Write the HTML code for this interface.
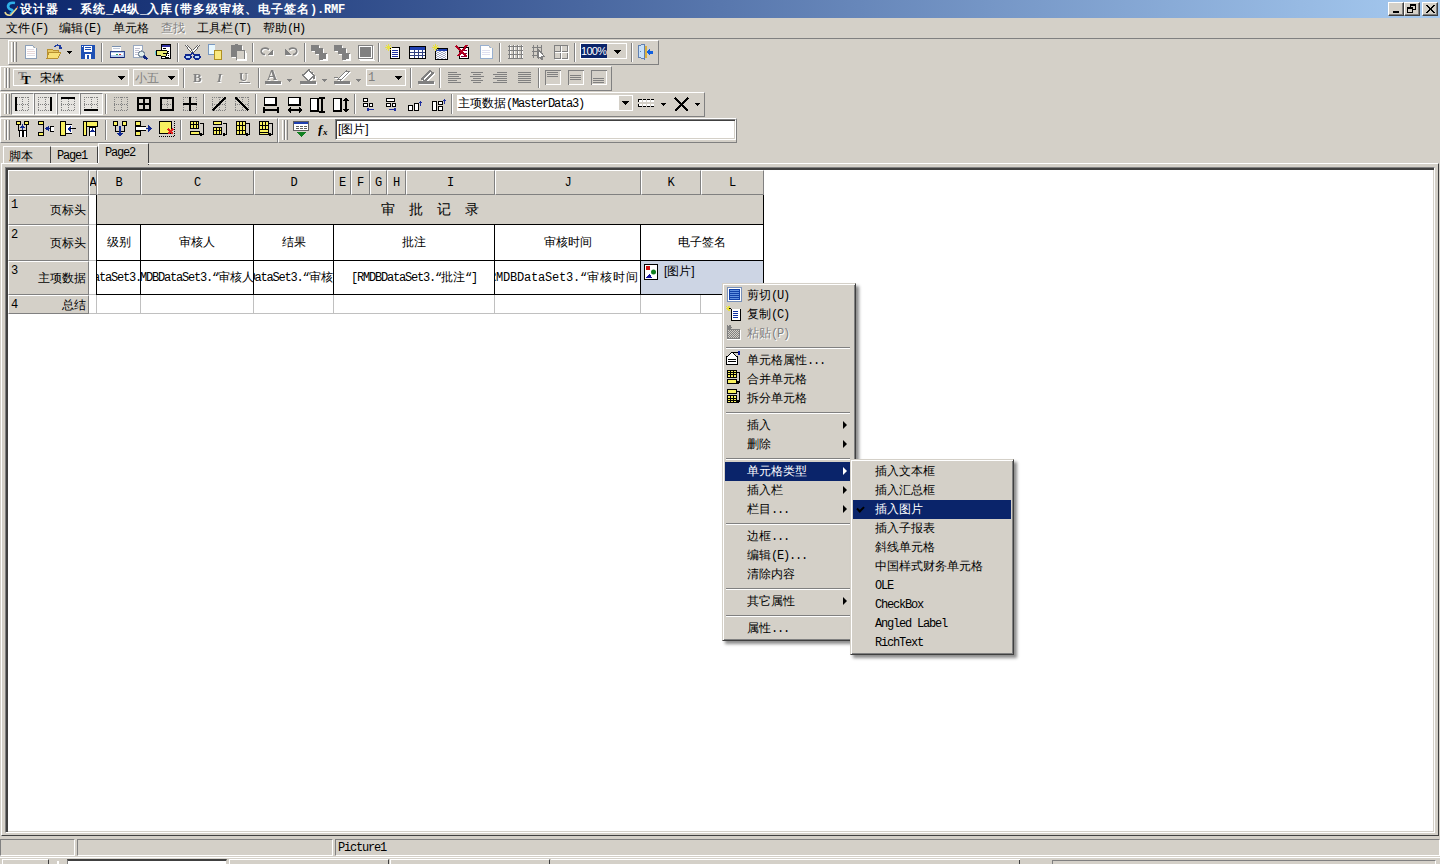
<!DOCTYPE html>
<html><head><meta charset="utf-8">
<style>
*{box-sizing:border-box;margin:0;padding:0}
html,body{width:1440px;height:864px;overflow:hidden;background:#D4D0C8;font-family:"Liberation Sans",sans-serif;font-size:12px;color:#000;position:relative}
.a{position:absolute}
.t{position:absolute;white-space:nowrap;line-height:12px;font-size:12px}
.m{font-family:"Liberation Mono",monospace;letter-spacing:-1.2px}
#title{left:0;top:0;width:1440px;height:18px;background:linear-gradient(to right,#0A246A 0%,#A6CAF0 100%)}
.wbtn{position:absolute;top:2px;width:16px;height:14px;background:#D4D0C8;border:1px solid;border-color:#fff #404040 #404040 #fff;box-shadow:inset -1px -1px 0 #808080}
.tb{position:absolute;background:#D4D0C8;border:1px solid;border-color:#fff #808080 #808080 #fff}
.grip{position:absolute;width:3px;border-left:1px solid #fff;border-right:1px solid #808080}
.sep{position:absolute;width:2px;border-left:1px solid #808080;border-right:1px solid #fff}
.hc{position:absolute;background:#D4D0C8;border-top:1px solid #fff;border-left:1px solid #fff;border-right:1px solid #808080;border-bottom:1px solid #808080;display:flex;justify-content:center;align-items:center;overflow:hidden}
.hc span{font-family:"Liberation Mono",monospace;font-size:12px;line-height:12px}
.rh{position:absolute;background:#D4D0C8;border-top:1px solid #fff;border-left:1px solid #fff;border-right:1px solid #808080;border-bottom:1px solid #808080}
.rn{position:absolute;left:2px;top:3px;font-family:"Liberation Mono",monospace;line-height:12px}
.rl{position:absolute;right:2px;bottom:4px;line-height:12px;white-space:nowrap}
.lg{background:#C0C0C0}
.bl{background:#000}
.ct{position:absolute;height:14px;line-height:12px;display:flex;justify-content:center;overflow:hidden;white-space:nowrap}
.ct>span{flex:none}
.menu{position:absolute;background:#D4D0C8;border:1px solid;border-color:#D4D0C8 #404040 #404040 #D4D0C8;box-shadow:inset 1px 1px 0 #fff,inset -1px -1px 0 #808080,3px 3px 3px rgba(0,0,0,.45)}
.mi{position:absolute;height:19px}
.mi.hl{background:#0A246A;color:#fff}
.mi.dis{color:#808080;text-shadow:1px 1px 0 #fff}
.mt{position:absolute;left:22px;top:3px;line-height:12px;white-space:nowrap}
.st{position:absolute;left:22px;top:3px;line-height:12px;white-space:nowrap}
.arr{position:absolute;right:6px;top:5px;width:0;height:0;border-left:4px solid #000;border-top:4px solid transparent;border-bottom:4px solid transparent}
.mi.hl .arr{border-left-color:#fff}
.msep{position:absolute;height:2px;border-top:1px solid #808080;border-bottom:1px solid #fff}
.chk{position:absolute;left:4px;top:6px;width:7px;height:5px;border-left:2px solid #000;border-bottom:2px solid #000;transform:rotate(-45deg)}
.sp{position:absolute;top:839px;height:17px;border:1px solid;border-color:#808080 #fff #fff #808080}
.ttl{color:#fff;font-weight:bold;letter-spacing:1px}
.tm{font-family:"Liberation Mono",monospace;letter-spacing:-0.2px}
.rl{top:50%;bottom:auto;transform:translateY(-50%)}
.c{display:inline-block;width:12px;font-weight:inherit;text-align:left;overflow:visible;text-indent:0}
.ttl .c{width:13px}
.big .c{width:28px}
.ls1 .c{width:13px}
</style></head><body>
<!-- title bar -->
<div id="title" class="a">
  <svg class="a" style="left:2px;top:1px" width="16" height="16" viewBox="0 0 16 16"><path d="M13 2 Q7 1 6 5 Q6 8 10 9 Q12 11 8 13" stroke="#30B0E8" stroke-width="2.6" fill="none"/><path d="M3 11 Q4 15 9 14 L15 7" stroke="#E8D890" stroke-width="1.5" fill="none"/><rect x="15" y="5" width="1" height="2" fill="#C04040"/></svg><div class="t ttl" style="left:20px;top:3px"><b class="c">设</b><b class="c">计</b><b class="c">器</b><span class="tm"> - </span><b class="c">系</b><b class="c">统</b><span class="tm">_A4</span><b class="c">纵</b><span class="tm">_</span><b class="c">入</b><b class="c">库</b><span class="tm">(</span><b class="c">带</b><b class="c">多</b><b class="c">级</b><b class="c">审</b><b class="c">核</b><b class="c">、</b><b class="c">电</b><b class="c">子</b><b class="c">签</b><b class="c">名</b><span class="tm">).RMF</span></div>
  <div class="wbtn" style="left:1388px"><div class="a" style="left:4px;top:8px;width:6px;height:2px;background:#000"></div></div>
  <div class="wbtn" style="left:1404px"><div class="a" style="left:5px;top:1px;width:6px;height:6px;border:1px solid #000;border-top-width:2px"></div><div class="a" style="left:2px;top:4px;width:6px;height:6px;border:1px solid #000;border-top-width:2px;background:#D4D0C8"></div></div>
  <div class="wbtn" style="left:1422px"><svg class="a" style="left:3px;top:2px" width="9" height="8" viewBox="0 0 9 8" shape-rendering="crispEdges"><path d="M0 0h2l2.5 3 2.5-3h2l-3.5 4 3.5 4h-2l-2.5-3-2.5 3h-2l3.5-4z" fill="#000"/></svg></div>
</div>
<!-- menubar -->
<div class="t" style="left:6px;top:22px"><b class="c">文</b><b class="c">件</b><span class="m">(F)</span></div>
<div class="t" style="left:59px;top:22px"><b class="c">编</b><b class="c">辑</b><span class="m">(E)</span></div>
<div class="t" style="left:113px;top:22px"><b class="c">单</b><b class="c">元</b><b class="c">格</b></div>
<div class="t" style="left:161px;top:22px;color:#808080;text-shadow:1px 1px 0 #fff"><b class="c">查</b><b class="c">找</b></div>
<div class="t" style="left:197px;top:22px"><b class="c">工</b><b class="c">具</b><b class="c">栏</b><span class="m">(T)</span></div>
<div class="t" style="left:263px;top:22px"><b class="c">帮</b><b class="c">助</b><span class="m">(H)</span></div>
<div class="a" style="left:0;top:38px;width:1440px;height:1px;background:#808080"></div>

<!-- toolbars -->
<div class="tb" style="left:8px;top:40px;width:651px;height:25px"></div>
<div class="tb" style="left:0px;top:66px;width:612px;height:25px"></div>
<div class="tb" style="left:0px;top:92px;width:705px;height:25px"></div>
<div class="tb" style="left:0px;top:118px;width:278px;height:25px"></div>
<!-- tabs -->
<div class="a" style="left:3px;top:146px;width:48px;height:18px;border-top:1px solid #fff;border-left:1px solid #fff;border-right:1px solid #404040"></div>
<div class="t" style="left:9px;top:150px"><b class="c">脚</b><b class="c">本</b></div>
<div class="a" style="left:51px;top:146px;width:47px;height:18px;border-top:1px solid #fff;border-right:1px solid #404040"></div>
<div class="t m" style="left:57px;top:150px">Page1</div>
<div class="a" style="left:98px;top:143px;width:51px;height:22px;background:#D4D0C8;border-top:1px solid #fff;border-left:1px solid #fff;border-right:1px solid #404040"></div>
<div class="t m" style="left:105px;top:147px">Page2</div>
<!-- panel -->
<div class="a" style="left:1px;top:163px;width:1438px;height:673px;border:1px solid;border-color:#fff #404040 #404040 #fff"></div>
<div class="a" style="left:98px;top:163px;width:50px;height:2px;background:#D4D0C8"></div>
<div class="a" style="left:5px;top:167px;width:1430px;height:666px;background:#fff;border:1px solid;border-color:#808080 #fff #fff #808080;box-shadow:inset 2px 2px 0 #404040,inset -1px -1px 0 #D4D0C8"></div>
<!-- status bar -->
<div class="sp" style="left:0px;width:75px"></div>
<div class="sp" style="left:77px;width:256px"></div>
<div class="sp" style="left:335px;width:1105px"></div>
<div class="t m" style="left:338px;top:842px">Picture1</div>
<div class="a" style="left:0;top:857px;width:1440px;height:1px;background:#fff"></div>
<div class="a" style="left:2px;top:859px;width:47px;height:6px;border-top:1px solid #fff;border-left:1px solid #fff;border-right:1px solid #404040"></div>
<div class="a" style="left:57px;top:861px;width:2px;height:3px;background:#fff"></div>
<div class="a" style="left:67px;top:859px;width:160px;height:6px;background:#fff;border-top:2px solid #404040;border-left:1px solid #808080;border-right:1px solid #D4D0C8"></div>
<div class="a" style="left:229px;top:859px;width:160px;height:6px;border-top:1px solid #fff;border-left:1px solid #fff;border-right:1px solid #404040"></div>
<div class="a" style="left:390px;top:859px;width:160px;height:6px;border-top:1px solid #fff;border-left:1px solid #fff;border-right:1px solid #404040"></div>
<div class="a" style="left:551px;top:859px;width:469px;height:6px;border-top:1px solid #fff"></div>
<div class="a" style="left:1019px;top:860px;width:1px;height:4px;background:#404040"></div>
<div class="a" style="left:1052px;top:860px;width:384px;height:5px;border-top:1px solid #808080;border-left:1px solid #808080;border-right:1px solid #fff"></div>
<div class="a" style="left:11px;top:42px;width:3px;height:20px;border-left:1px solid #fff;border-right:1px solid #808080"></div>
<div class="a" style="left:14px;top:42px;width:3px;height:20px;border-left:1px solid #fff;border-right:1px solid #808080"></div>
<svg class="a" style="left:25px;top:45px;" width="12" height="14" viewBox="0 0 12 14" shape-rendering="crispEdges"><rect x="0" y="0" width="8" height="1" fill="#8DA0B9"/><rect x="0" y="0" width="1" height="14" fill="#8DA0B9"/><rect x="0" y="13" width="12" height="1" fill="#8DA0B9"/><rect x="11" y="3" width="1" height="11" fill="#8DA0B9"/><rect x="1" y="1" width="7" height="12" fill="#fff"/><rect x="8" y="1" width="1" height="1" fill="#8DA0B9"/><rect x="9" y="2" width="1" height="1" fill="#8DA0B9"/><rect x="10" y="3" width="1" height="1" fill="#8DA0B9"/><rect x="1" y="3" width="10" height="10" fill="#fff"/><rect x="2" y="4" width="7" height="1" fill="#E0D8E0"/><rect x="2" y="6" width="8" height="1" fill="#E8D8D8"/><rect x="2" y="8" width="8" height="1" fill="#E8D8D8"/><rect x="2" y="10" width="8" height="1" fill="#E0E0E8"/></svg>
<svg class="a" style="left:46px;top:44px;" width="17" height="15" viewBox="0 0 17 15" shape-rendering="crispEdges"><path d="M9 3 Q11 0 14 2 L15 4" stroke="#1E3CA0" stroke-width="1.5" fill="none"/><rect x="13" y="3" width="3" height="2" fill="#1E3CA0"/><path d="M1 6 L5 5 L7 6 L12 6 L12 8 L3 8 L1 13Z" fill="#E8C860" stroke="#B89030"/><path d="M3 8 L15 8 L12 14 L1 14Z" fill="#F8E078" stroke="#B89030"/></svg>
<svg class="a" style="left:67px;top:51px;" width="5" height="3" viewBox="0 0 5 3" shape-rendering="crispEdges"><rect x="0" y="0" width="5" height="1" fill="#000"/><rect x="1" y="1" width="3" height="1" fill="#000"/><rect x="2" y="2" width="1" height="1" fill="#000"/></svg>
<svg class="a" style="left:81px;top:45px;" width="14" height="14" viewBox="0 0 14 14" shape-rendering="crispEdges"><rect x="0" y="0" width="14" height="14" fill="#1E50B4"/><rect x="3" y="1" width="8" height="6" fill="#fff"/><rect x="4" y="2" width="6" height="1" fill="#1E50B4"/><rect x="4" y="4" width="6" height="1" fill="#1E50B4"/><rect x="4" y="9" width="6" height="5" fill="#fff"/><rect x="6" y="10" width="2" height="4" fill="#1E50B4"/><rect x="1" y="1" width="1" height="1" fill="#fff"/></svg>
<div class="a" style="left:101px;top:43px;width:1px;height:19px;background:#808080"></div><div class="a" style="left:102px;top:43px;width:1px;height:19px;background:#fff"></div>
<svg class="a" style="left:109px;top:46px;" width="16" height="12" viewBox="0 0 16 12" shape-rendering="crispEdges"><rect x="3" y="0" width="9" height="5" fill="#fff"/><rect x="3" y="0" width="9" height="1" fill="#7890B0"/><rect x="4" y="2" width="7" height="1" fill="#C0C8D8"/><path d="M1 5 L15 5 L15 11 L1 11Z" fill="#B8D0F0" stroke="#304890"/><rect x="2" y="7" width="12" height="2" fill="#fff"/><rect x="7" y="8" width="2" height="1" fill="#20A060"/><rect x="10" y="8" width="2" height="1" fill="#C03040"/><rect x="1" y="11" width="14" height="1" fill="#102070"/></svg>
<svg class="a" style="left:133px;top:45px;" width="16" height="15" viewBox="0 0 16 15" shape-rendering="crispEdges"><rect x="0" y="0" width="10" height="13" fill="#98A8C0"/><rect x="1" y="1" width="8" height="11" fill="#fff"/><rect x="2" y="3" width="5" height="1" fill="#C0C0D0"/><rect x="2" y="5" width="4" height="1" fill="#C0C0D0"/><rect x="2" y="7" width="3" height="1" fill="#C0C0D0"/><rect x="2" y="9" width="3" height="1" fill="#C0C0D0"/><circle cx="8.5" cy="9" r="3" fill="#E0F0F0" stroke="#8090A0" stroke-width="1.2"/><path d="M10.5 11 L14.5 14.5" stroke="#102880" stroke-width="2.5"/></svg>
<svg class="a" style="left:155px;top:44px;" width="17" height="16" viewBox="0 0 17 16" shape-rendering="crispEdges"><rect x="6" y="0" width="10" height="15" fill="#000"/><rect x="7" y="1" width="8" height="13" fill="#fff"/><rect x="7" y="1" width="8" height="2" fill="#3030A0"/><rect x="8" y="4" width="3" height="1" fill="#000"/><rect x="13" y="7" width="1" height="1" fill="#000"/><rect x="13" y="9" width="1" height="1" fill="#000"/><rect x="13" y="11" width="1" height="1" fill="#000"/><rect x="10" y="13" width="4" height="1" fill="#000"/><path d="M1 7 L6 6 L12 7 L12 9 L8 9 L12 10 L11 12 L6 12 L1 11Z" fill="#E8E870" stroke="#000"/><rect x="0" y="7" width="1" height="4" fill="#60C8D0"/></svg>
<div class="a" style="left:177px;top:43px;width:1px;height:19px;background:#808080"></div><div class="a" style="left:178px;top:43px;width:1px;height:19px;background:#fff"></div>
<svg class="a" style="left:184px;top:44px;" width="17" height="16" viewBox="0 0 17 16" shape-rendering="crispEdges"><path d="M2 1 L9 9 M15 1 L8 9" stroke="#606060" stroke-width="2.4"/><path d="M2 1 L9 9 M15 1 L8 9" stroke="#fff" stroke-width="1"/><ellipse cx="4" cy="13" rx="3" ry="2.3" fill="#B8D8F8" stroke="#102890" stroke-width="1.6"/><ellipse cx="13" cy="13" rx="3" ry="2.3" fill="#B8D8F8" stroke="#102890" stroke-width="1.6"/><path d="M6 11 L8.5 9 L11 11" stroke="#102890" stroke-width="1.6" fill="none"/></svg>
<svg class="a" style="left:208px;top:44px;" width="15" height="16" viewBox="0 0 15 16" shape-rendering="crispEdges"><rect x="0" y="0" width="7" height="11" fill="#7898C0"/><rect x="1" y="1" width="6" height="9" fill="#E8F8FF"/><rect x="6" y="6" width="8" height="10" fill="#B09020"/><rect x="7" y="7" width="6" height="8" fill="#F8E880"/></svg>
<svg class="a" style="left:230px;top:44px;filter:drop-shadow(1px 1px 0 #fff)" width="16" height="16" viewBox="0 0 16 16" shape-rendering="crispEdges"><rect x="1" y="1" width="11" height="12" fill="#808080"/><rect x="5" y="0" width="3" height="2" fill="#808080"/><rect x="6" y="6" width="9" height="10" fill="#808080"/><rect x="7" y="7" width="7" height="8" fill="#D4D0C8"/><rect x="7" y="15" width="9" height="1" fill="#fff"/><rect x="15" y="8" width="1" height="8" fill="#fff"/></svg>
<div class="a" style="left:252px;top:43px;width:1px;height:19px;background:#808080"></div><div class="a" style="left:253px;top:43px;width:1px;height:19px;background:#fff"></div>
<svg class="a" style="left:260px;top:47px;filter:drop-shadow(1px 1px 0 #fff)" width="15" height="10" viewBox="0 0 15 10" shape-rendering="crispEdges"><path d="M9 2.5 Q6 0.5 3 1.5 Q0.8 2.5 1.3 5 Q2 7.5 5 7.5" stroke="#808080" stroke-width="1.6" fill="none" shape-rendering="auto"/><path d="M13 2 L13 8 L7 8Z" fill="#808080"/></svg>
<svg class="a" style="left:283px;top:47px;filter:drop-shadow(1px 1px 0 #fff)" width="15" height="10" viewBox="0 0 15 10" shape-rendering="crispEdges"><path d="M6 2.5 Q9 0.5 12 1.5 Q14.2 2.5 13.7 5 Q13 7.5 10 7.5" stroke="#808080" stroke-width="1.6" fill="none" shape-rendering="auto"/><path d="M2 2 L2 8 L8 8Z" fill="#808080"/></svg>
<div class="a" style="left:304px;top:43px;width:1px;height:19px;background:#808080"></div><div class="a" style="left:305px;top:43px;width:1px;height:19px;background:#fff"></div>
<svg class="a" style="left:311px;top:45px;filter:drop-shadow(1px 1px 0 #fff)" width="16" height="15" viewBox="0 0 16 15" shape-rendering="crispEdges"><rect x="0" y="0" width="8" height="6" fill="#808080"/><rect x="4" y="3" width="8" height="6" fill="#808080"/><rect x="8" y="8" width="8" height="7" fill="#808080"/><rect x="12" y="14" width="4" height="1" fill="#fff"/><rect x="15" y="9" width="1" height="6" fill="#fff"/></svg>
<svg class="a" style="left:334px;top:45px;filter:drop-shadow(1px 1px 0 #fff)" width="16" height="15" viewBox="0 0 16 15" shape-rendering="crispEdges"><rect x="0" y="0" width="8" height="6" fill="#808080"/><rect x="4" y="3" width="8" height="6" fill="#808080"/><rect x="8" y="8" width="8" height="7" fill="#808080"/><rect x="12" y="14" width="4" height="1" fill="#fff"/><rect x="15" y="9" width="1" height="6" fill="#fff"/></svg>
<svg class="a" style="left:358px;top:45px;filter:drop-shadow(1px 1px 0 #fff)" width="16" height="15" viewBox="0 0 16 15" shape-rendering="crispEdges"><rect x="0" y="0" width="15" height="14" fill="#808080"/><rect x="1" y="1" width="13" height="12" fill="#fff"/><rect x="2" y="2" width="11" height="10" fill="#808080"/><rect x="1" y="14" width="15" height="1" fill="#fff"/></svg>
<div class="a" style="left:378px;top:43px;width:1px;height:19px;background:#808080"></div><div class="a" style="left:379px;top:43px;width:1px;height:19px;background:#fff"></div>
<svg class="a" style="left:385px;top:44px;" width="16" height="16" viewBox="0 0 16 16" shape-rendering="crispEdges"><rect x="5" y="3" width="10" height="12" fill="#000"/><rect x="6" y="4" width="8" height="10" fill="#fff"/><rect x="7" y="6" width="6" height="1" fill="#2030A0"/><rect x="7" y="8" width="6" height="1" fill="#2030A0"/><rect x="7" y="10" width="6" height="1" fill="#2030A0"/><rect x="7" y="12" width="6" height="1" fill="#2030A0"/><path d="M3 0 L3 7 M0 3.5 L7 3.5 M1 1 L6 6 M6 1 L1 6" stroke="#E8E040" stroke-width="1"/></svg>
<svg class="a" style="left:409px;top:46px;" width="17" height="13" viewBox="0 0 17 13" shape-rendering="crispEdges"><rect x="0" y="0" width="17" height="13" fill="#000"/><rect x="1" y="1" width="15" height="3" fill="#2040B0"/><rect x="1" y="4" width="15" height="8" fill="#fff"/><rect x="1" y="6" width="15" height="1" fill="#304080"/><rect x="1" y="9" width="15" height="1" fill="#304080"/><rect x="5" y="4" width="1" height="8" fill="#304080"/><rect x="9" y="4" width="1" height="8" fill="#304080"/><rect x="13" y="4" width="1" height="8" fill="#304080"/></svg>
<svg class="a" style="left:432px;top:44px;" width="16" height="16" viewBox="0 0 16 16" shape-rendering="crispEdges"><rect x="3" y="4" width="13" height="12" fill="#000"/><rect x="4" y="5" width="11" height="2" fill="#2040B0"/><rect x="4" y="7" width="11" height="8" fill="#fff"/><rect x="4" y="7" width="1" height="1" fill="#A0A8C0"/><rect x="7" y="7" width="1" height="1" fill="#A0A8C0"/><rect x="8" y="7" width="1" height="1" fill="#A0A8C0"/><rect x="11" y="7" width="1" height="1" fill="#A0A8C0"/><rect x="12" y="7" width="1" height="1" fill="#A0A8C0"/><rect x="5" y="8" width="1" height="1" fill="#A0A8C0"/><rect x="6" y="8" width="1" height="1" fill="#A0A8C0"/><rect x="9" y="8" width="1" height="1" fill="#A0A8C0"/><rect x="10" y="8" width="1" height="1" fill="#A0A8C0"/><rect x="13" y="8" width="1" height="1" fill="#A0A8C0"/><rect x="4" y="9" width="1" height="1" fill="#A0A8C0"/><rect x="7" y="9" width="1" height="1" fill="#A0A8C0"/><rect x="8" y="9" width="1" height="1" fill="#A0A8C0"/><rect x="11" y="9" width="1" height="1" fill="#A0A8C0"/><rect x="12" y="9" width="1" height="1" fill="#A0A8C0"/><rect x="5" y="10" width="1" height="1" fill="#A0A8C0"/><rect x="6" y="10" width="1" height="1" fill="#A0A8C0"/><rect x="9" y="10" width="1" height="1" fill="#A0A8C0"/><rect x="10" y="10" width="1" height="1" fill="#A0A8C0"/><rect x="13" y="10" width="1" height="1" fill="#A0A8C0"/><rect x="4" y="11" width="1" height="1" fill="#A0A8C0"/><rect x="7" y="11" width="1" height="1" fill="#A0A8C0"/><rect x="8" y="11" width="1" height="1" fill="#A0A8C0"/><rect x="11" y="11" width="1" height="1" fill="#A0A8C0"/><rect x="12" y="11" width="1" height="1" fill="#A0A8C0"/><rect x="5" y="12" width="1" height="1" fill="#A0A8C0"/><rect x="6" y="12" width="1" height="1" fill="#A0A8C0"/><rect x="9" y="12" width="1" height="1" fill="#A0A8C0"/><rect x="10" y="12" width="1" height="1" fill="#A0A8C0"/><rect x="13" y="12" width="1" height="1" fill="#A0A8C0"/><rect x="4" y="13" width="1" height="1" fill="#A0A8C0"/><rect x="7" y="13" width="1" height="1" fill="#A0A8C0"/><rect x="8" y="13" width="1" height="1" fill="#A0A8C0"/><rect x="11" y="13" width="1" height="1" fill="#A0A8C0"/><rect x="12" y="13" width="1" height="1" fill="#A0A8C0"/><rect x="5" y="14" width="1" height="1" fill="#A0A8C0"/><rect x="6" y="14" width="1" height="1" fill="#A0A8C0"/><rect x="9" y="14" width="1" height="1" fill="#A0A8C0"/><rect x="10" y="14" width="1" height="1" fill="#A0A8C0"/><rect x="13" y="14" width="1" height="1" fill="#A0A8C0"/><path d="M3 0 L3 7 M0 3.5 L7 3.5 M1 1 L6 6 M6 1 L1 6" stroke="#E8E040" stroke-width="1"/></svg>
<svg class="a" style="left:455px;top:44px;" width="15" height="16" viewBox="0 0 15 16" shape-rendering="crispEdges"><rect x="4" y="3" width="10" height="12" fill="#000"/><rect x="5" y="4" width="8" height="10" fill="#fff"/><rect x="6" y="6" width="6" height="1" fill="#800040"/><rect x="6" y="9" width="6" height="1" fill="#800040"/><rect x="6" y="12" width="6" height="1" fill="#800040"/><path d="M1 2 L12 13 M12 1 L3 12" stroke="#B00020" stroke-width="2.2"/></svg>
<svg class="a" style="left:480px;top:45px;" width="13" height="14" viewBox="0 0 13 14" shape-rendering="crispEdges"><rect x="0" y="0" width="9" height="14" fill="#98B0D0"/><rect x="0" y="13" width="13" height="1" fill="#98B0D0"/><rect x="12" y="3" width="1" height="11" fill="#98B0D0"/><rect x="1" y="1" width="8" height="12" fill="#fff"/><rect x="9" y="1" width="1" height="1" fill="#98B0D0"/><rect x="10" y="2" width="1" height="1" fill="#98B0D0"/><rect x="11" y="3" width="1" height="1" fill="#98B0D0"/><rect x="1" y="3" width="11" height="10" fill="#fff"/><rect x="2" y="5" width="8" height="1" fill="#E0E0F0"/><rect x="2" y="7" width="8" height="1" fill="#E0E0F0"/><rect x="2" y="9" width="8" height="1" fill="#E0E0F0"/></svg>
<div class="a" style="left:499px;top:43px;width:1px;height:19px;background:#808080"></div><div class="a" style="left:500px;top:43px;width:1px;height:19px;background:#fff"></div>
<svg class="a" style="left:508px;top:45px;" width="15" height="14" viewBox="0 0 15 14" shape-rendering="crispEdges"><rect x="1" y="0" width="1" height="14" fill="#808080"/><rect x="2" y="0" width="1" height="14" fill="#fff"/><rect x="5" y="0" width="1" height="14" fill="#808080"/><rect x="6" y="0" width="1" height="14" fill="#fff"/><rect x="9" y="0" width="1" height="14" fill="#808080"/><rect x="10" y="0" width="1" height="14" fill="#fff"/><rect x="13" y="0" width="1" height="14" fill="#808080"/><rect x="14" y="0" width="1" height="14" fill="#fff"/><rect x="0" y="1" width="15" height="1" fill="#808080"/><rect x="0" y="5" width="15" height="1" fill="#808080"/><rect x="0" y="9" width="15" height="1" fill="#808080"/><rect x="0" y="13" width="15" height="1" fill="#808080"/></svg>
<svg class="a" style="left:532px;top:45px;" width="14" height="15" viewBox="0 0 14 15" shape-rendering="crispEdges"><rect x="1" y="0" width="1" height="13" fill="#808080"/><rect x="5" y="0" width="1" height="13" fill="#808080"/><rect x="9" y="0" width="1" height="13" fill="#808080"/><rect x="0" y="2" width="10" height="1" fill="#808080"/><rect x="0" y="6" width="10" height="1" fill="#808080"/><rect x="0" y="10" width="10" height="1" fill="#808080"/><path d="M6 4 L6 14 L8 12 L10 15 L11 14 L9 11 L12 11Z" fill="#fff" stroke="#808080"/></svg>
<svg class="a" style="left:554px;top:45px;" width="15" height="15" viewBox="0 0 15 15" shape-rendering="crispEdges"><rect x="0" y="0" width="14" height="1" fill="#808080"/><rect x="0" y="0" width="1" height="14" fill="#808080"/><rect x="13" y="0" width="1" height="14" fill="#808080"/><rect x="0" y="13" width="14" height="1" fill="#808080"/><rect x="6" y="0" width="1" height="14" fill="#808080"/><rect x="0" y="6" width="14" height="1" fill="#808080"/><rect x="1" y="14" width="14" height="1" fill="#fff"/><rect x="14" y="1" width="1" height="14" fill="#fff"/><rect x="7" y="1" width="1" height="13" fill="#fff"/><rect x="1" y="7" width="13" height="1" fill="#fff"/></svg>
<div class="a" style="left:574px;top:43px;width:1px;height:19px;background:#808080"></div><div class="a" style="left:575px;top:43px;width:1px;height:19px;background:#fff"></div>
<div class="a" style="left:580px;top:43px;width:47px;height:16px;border:1px solid #fff;background:#D4D0C8"></div>
<div class="a" style="left:581px;top:44px;width:26px;height:14px;background:#0A246A"></div>
<div class="t" style="left:581px;top:45px;color:#fff;font-size:11px;letter-spacing:-0.7px">100%</div>
<svg class="a" style="left:614px;top:50px;" width="7" height="4" viewBox="0 0 7 4" shape-rendering="crispEdges"><rect x="0" y="0" width="7" height="1" fill="#000"/><rect x="1" y="1" width="5" height="1" fill="#000"/><rect x="2" y="2" width="3" height="1" fill="#000"/><rect x="3" y="3" width="1" height="1" fill="#000"/></svg>
<div class="a" style="left:631px;top:43px;width:1px;height:19px;background:#808080"></div><div class="a" style="left:632px;top:43px;width:1px;height:19px;background:#fff"></div>
<svg class="a" style="left:637px;top:44px;" width="17" height="16" viewBox="0 0 17 16" shape-rendering="crispEdges"><path d="M1 2 L7 0 L7 15 L1 13Z" fill="#C8E0F8" stroke="#6080B0"/><rect x="3" y="7" width="1" height="1" fill="#6080B0"/><rect x="8" y="2" width="2" height="12" fill="#D8B040"/><path d="M9 8 L13 4 L13 6.5 L16 6.5 L16 9.5 L13 9.5 L13 12Z" fill="#1060E0"/></svg>
<div class="a" style="left:4px;top:68px;width:3px;height:20px;border-left:1px solid #fff;border-right:1px solid #808080"></div>
<div class="a" style="left:7px;top:68px;width:3px;height:20px;border-left:1px solid #fff;border-right:1px solid #808080"></div>
<div class="a" style="left:13px;top:69px;width:116px;height:17px;border:1px solid #fff;background:#D4D0C8"></div>
<svg class="a" style="left:18px;top:70px;" width="15" height="15" viewBox="0 0 15 15" shape-rendering="crispEdges"><text x="0" y="10" font-family="Liberation Serif" font-weight="bold" font-size="13" fill="#808080">T</text><text x="4" y="14" font-family="Liberation Serif" font-weight="bold" font-size="13" fill="#000">T</text></svg>
<div class="t" style="left:40px;top:72px"><b class="c">宋</b><b class="c">体</b></div>
<svg class="a" style="left:118px;top:76px;" width="7" height="4" viewBox="0 0 7 4" shape-rendering="crispEdges"><rect x="0" y="0" width="7" height="1" fill="#000"/><rect x="1" y="1" width="5" height="1" fill="#000"/><rect x="2" y="2" width="3" height="1" fill="#000"/><rect x="3" y="3" width="1" height="1" fill="#000"/></svg>
<div class="a" style="left:133px;top:69px;width:46px;height:17px;border:1px solid #fff;background:#D4D0C8"></div>
<div class="t" style="left:135px;top:72px;color:#808080"><b class="c">小</b><b class="c">五</b></div>
<svg class="a" style="left:168px;top:76px;" width="7" height="4" viewBox="0 0 7 4" shape-rendering="crispEdges"><rect x="0" y="0" width="7" height="1" fill="#000"/><rect x="1" y="1" width="5" height="1" fill="#000"/><rect x="2" y="2" width="3" height="1" fill="#000"/><rect x="3" y="3" width="1" height="1" fill="#000"/></svg>
<div class="a" style="left:183px;top:68px;width:1px;height:20px;background:#808080"></div><div class="a" style="left:184px;top:68px;width:1px;height:20px;background:#fff"></div>
<svg class="a" style="left:193px;top:72px;filter:drop-shadow(1px 1px 0 #fff)" width="12" height="11" viewBox="0 0 12 11" shape-rendering="crispEdges"><text x="0" y="10" font-family="Liberation Serif" font-weight="bold" font-size="13" fill="#808080">B</text></svg>
<svg class="a" style="left:216px;top:72px;filter:drop-shadow(1px 1px 0 #fff)" width="12" height="11" viewBox="0 0 12 11" shape-rendering="crispEdges"><text x="1" y="10" font-family="Liberation Serif" font-weight="bold" font-style="italic" font-size="13" fill="#808080">I</text></svg>
<svg class="a" style="left:239px;top:71px;filter:drop-shadow(1px 1px 0 #fff)" width="12" height="13" viewBox="0 0 12 13" shape-rendering="crispEdges"><text x="0" y="10" font-family="Liberation Serif" font-weight="bold" font-size="12" fill="#808080">U</text><rect x="0" y="11" width="11" height="1" fill="#808080"/></svg>
<div class="a" style="left:258px;top:68px;width:1px;height:20px;background:#808080"></div><div class="a" style="left:259px;top:68px;width:1px;height:20px;background:#fff"></div>
<svg class="a" style="left:265px;top:69px;filter:drop-shadow(1px 1px 0 #fff)" width="16" height="16" viewBox="0 0 16 16" shape-rendering="crispEdges"><text x="2" y="11" font-family="Liberation Serif" font-weight="bold" font-size="14" fill="#808080">A</text><rect x="0" y="12" width="16" height="3" fill="#808080"/></svg>
<svg class="a" style="left:287px;top:79px;" width="5" height="3" viewBox="0 0 5 3" shape-rendering="crispEdges"><rect x="0" y="0" width="5" height="1" fill="#808080"/><rect x="1" y="1" width="3" height="1" fill="#808080"/><rect x="2" y="2" width="1" height="1" fill="#808080"/></svg>
<svg class="a" style="left:300px;top:69px;filter:drop-shadow(1px 1px 0 #fff)" width="17" height="16" viewBox="0 0 17 16" shape-rendering="crispEdges"><path d="M3 6 L9 1 L14 7 L8 12Z" fill="#fff" stroke="#808080" stroke-width="1.5"/><path d="M12 4 Q15 7 14 10" stroke="#808080" stroke-width="1.5" fill="none"/><rect x="0" y="12" width="16" height="3" fill="#808080"/></svg>
<svg class="a" style="left:322px;top:79px;" width="5" height="3" viewBox="0 0 5 3" shape-rendering="crispEdges"><rect x="0" y="0" width="5" height="1" fill="#808080"/><rect x="1" y="1" width="3" height="1" fill="#808080"/><rect x="2" y="2" width="1" height="1" fill="#808080"/></svg>
<svg class="a" style="left:334px;top:69px;filter:drop-shadow(1px 1px 0 #fff)" width="17" height="16" viewBox="0 0 17 16" shape-rendering="crispEdges"><path d="M4 10 L12 2 L15 3 L7 11Z" fill="#fff" stroke="#808080" stroke-width="1.3"/><rect x="0" y="8" width="4" height="1" fill="#808080"/><rect x="0" y="12" width="16" height="3" fill="#808080"/></svg>
<svg class="a" style="left:356px;top:79px;" width="5" height="3" viewBox="0 0 5 3" shape-rendering="crispEdges"><rect x="0" y="0" width="5" height="1" fill="#808080"/><rect x="1" y="1" width="3" height="1" fill="#808080"/><rect x="2" y="2" width="1" height="1" fill="#808080"/></svg>
<div class="a" style="left:366px;top:69px;width:40px;height:17px;border:1px solid #fff;background:#D4D0C8"></div>
<div class="t m" style="left:368px;top:72px;color:#808080">1</div>
<svg class="a" style="left:395px;top:76px;" width="7" height="4" viewBox="0 0 7 4" shape-rendering="crispEdges"><rect x="0" y="0" width="7" height="1" fill="#000"/><rect x="1" y="1" width="5" height="1" fill="#000"/><rect x="2" y="2" width="3" height="1" fill="#000"/><rect x="3" y="3" width="1" height="1" fill="#000"/></svg>
<div class="a" style="left:410px;top:68px;width:1px;height:20px;background:#808080"></div><div class="a" style="left:411px;top:68px;width:1px;height:20px;background:#fff"></div>
<svg class="a" style="left:418px;top:69px;filter:drop-shadow(1px 1px 0 #fff)" width="17" height="16" viewBox="0 0 17 16" shape-rendering="crispEdges"><path d="M4 10 L12 2 L15 4 L7 12Z" fill="#fff" stroke="#808080" stroke-width="1.5"/><rect x="0" y="12" width="16" height="3" fill="#808080"/></svg>
<div class="a" style="left:439px;top:68px;width:1px;height:20px;background:#808080"></div><div class="a" style="left:440px;top:68px;width:1px;height:20px;background:#fff"></div>
<svg class="a" style="left:448px;top:72px;" width="15" height="12" viewBox="0 0 15 12" shape-rendering="crispEdges"><rect x="0" y="0" width="9" height="1" fill="#808080"/><rect x="1" y="1" width="9" height="0.01" fill="#fff"/><rect x="0" y="2" width="13" height="1" fill="#808080"/><rect x="1" y="3" width="13" height="0.01" fill="#fff"/><rect x="0" y="4" width="11" height="1" fill="#808080"/><rect x="1" y="5" width="11" height="0.01" fill="#fff"/><rect x="0" y="6" width="13" height="1" fill="#808080"/><rect x="1" y="7" width="13" height="0.01" fill="#fff"/><rect x="0" y="8" width="9" height="1" fill="#808080"/><rect x="1" y="9" width="9" height="0.01" fill="#fff"/><rect x="0" y="10" width="13" height="1" fill="#808080"/><rect x="1" y="11" width="13" height="0.01" fill="#fff"/></svg>
<svg class="a" style="left:470px;top:72px;" width="15" height="12" viewBox="0 0 15 12" shape-rendering="crispEdges"><rect x="1" y="0" width="12" height="1" fill="#808080"/><rect x="2" y="1" width="12" height="0.01" fill="#fff"/><rect x="3" y="2" width="8" height="1" fill="#808080"/><rect x="4" y="3" width="8" height="0.01" fill="#fff"/><rect x="0" y="4" width="14" height="1" fill="#808080"/><rect x="1" y="5" width="14" height="0.01" fill="#fff"/><rect x="3" y="6" width="8" height="1" fill="#808080"/><rect x="4" y="7" width="8" height="0.01" fill="#fff"/><rect x="1" y="8" width="12" height="1" fill="#808080"/><rect x="2" y="9" width="12" height="0.01" fill="#fff"/><rect x="3" y="10" width="8" height="1" fill="#808080"/><rect x="4" y="11" width="8" height="0.01" fill="#fff"/></svg>
<svg class="a" style="left:493px;top:72px;" width="15" height="12" viewBox="0 0 15 12" shape-rendering="crispEdges"><rect x="4" y="0" width="10" height="1" fill="#808080"/><rect x="5" y="1" width="10" height="0.01" fill="#fff"/><rect x="0" y="2" width="14" height="1" fill="#808080"/><rect x="1" y="3" width="14" height="0.01" fill="#fff"/><rect x="2" y="4" width="12" height="1" fill="#808080"/><rect x="3" y="5" width="12" height="0.01" fill="#fff"/><rect x="0" y="6" width="14" height="1" fill="#808080"/><rect x="1" y="7" width="14" height="0.01" fill="#fff"/><rect x="4" y="8" width="10" height="1" fill="#808080"/><rect x="5" y="9" width="10" height="0.01" fill="#fff"/><rect x="0" y="10" width="14" height="1" fill="#808080"/><rect x="1" y="11" width="14" height="0.01" fill="#fff"/></svg>
<svg class="a" style="left:518px;top:72px;" width="15" height="12" viewBox="0 0 15 12" shape-rendering="crispEdges"><rect x="0" y="0" width="13" height="1" fill="#808080"/><rect x="1" y="1" width="13" height="0.01" fill="#fff"/><rect x="0" y="2" width="13" height="1" fill="#808080"/><rect x="1" y="3" width="13" height="0.01" fill="#fff"/><rect x="0" y="4" width="13" height="1" fill="#808080"/><rect x="1" y="5" width="13" height="0.01" fill="#fff"/><rect x="0" y="6" width="13" height="1" fill="#808080"/><rect x="1" y="7" width="13" height="0.01" fill="#fff"/><rect x="0" y="8" width="13" height="1" fill="#808080"/><rect x="1" y="9" width="13" height="0.01" fill="#fff"/><rect x="0" y="10" width="13" height="1" fill="#808080"/><rect x="1" y="11" width="13" height="0.01" fill="#fff"/></svg>
<div class="a" style="left:538px;top:68px;width:1px;height:20px;background:#808080"></div><div class="a" style="left:539px;top:68px;width:1px;height:20px;background:#fff"></div>
<svg class="a" style="left:545px;top:70px;" width="16" height="16" viewBox="0 0 16 16" shape-rendering="crispEdges"><rect x="0" y="0" width="16" height="15" fill="#808080"/><rect x="1" y="1" width="14" height="13" fill="#D4D0C8"/><rect x="1" y="14" width="15" height="1" fill="#fff"/><rect x="15" y="1" width="1" height="14" fill="#fff"/><rect x="2" y="2" width="11" height="1" fill="#808080"/><rect x="2" y="4" width="11" height="1" fill="#808080"/><rect x="2" y="6" width="11" height="1" fill="#808080"/></svg>
<svg class="a" style="left:568px;top:70px;" width="16" height="16" viewBox="0 0 16 16" shape-rendering="crispEdges"><rect x="0" y="0" width="16" height="15" fill="#808080"/><rect x="1" y="1" width="14" height="13" fill="#D4D0C8"/><rect x="1" y="14" width="15" height="1" fill="#fff"/><rect x="15" y="1" width="1" height="14" fill="#fff"/><rect x="2" y="5" width="11" height="1" fill="#808080"/><rect x="2" y="7" width="11" height="1" fill="#808080"/><rect x="2" y="9" width="11" height="1" fill="#808080"/></svg>
<svg class="a" style="left:591px;top:70px;" width="16" height="16" viewBox="0 0 16 16" shape-rendering="crispEdges"><rect x="0" y="0" width="16" height="15" fill="#808080"/><rect x="1" y="1" width="14" height="13" fill="#D4D0C8"/><rect x="1" y="14" width="15" height="1" fill="#fff"/><rect x="15" y="1" width="1" height="14" fill="#fff"/><rect x="2" y="8" width="11" height="1" fill="#808080"/><rect x="2" y="10" width="11" height="1" fill="#808080"/><rect x="2" y="12" width="11" height="1" fill="#808080"/></svg>
<div class="a" style="left:4px;top:94px;width:3px;height:20px;border-left:1px solid #fff;border-right:1px solid #808080"></div>
<div class="a" style="left:7px;top:94px;width:3px;height:20px;border-left:1px solid #fff;border-right:1px solid #808080"></div>
<div class="a" style="left:11px;top:93px;width:23px;height:22px;border:1px solid;border-color:#808080 #fff #fff #808080;background:#E6E4E0"></div>
<div class="a" style="left:34px;top:93px;width:23px;height:22px;border:1px solid;border-color:#808080 #fff #fff #808080;background:#E6E4E0"></div>
<div class="a" style="left:57px;top:93px;width:23px;height:22px;border:1px solid;border-color:#808080 #fff #fff #808080;background:#E6E4E0"></div>
<div class="a" style="left:80px;top:93px;width:23px;height:22px;border:1px solid;border-color:#808080 #fff #fff #808080;background:#E6E4E0"></div>
<svg class="a" style="left:15px;top:97px;" width="14" height="14" viewBox="0 0 14 14" shape-rendering="crispEdges"><rect x="0" y="0" width="1" height="1" fill="#808080"/><rect x="0" y="7" width="1" height="1" fill="#808080"/><rect x="0" y="13" width="1" height="1" fill="#808080"/><rect x="2" y="0" width="1" height="1" fill="#808080"/><rect x="2" y="7" width="1" height="1" fill="#808080"/><rect x="2" y="13" width="1" height="1" fill="#808080"/><rect x="4" y="0" width="1" height="1" fill="#808080"/><rect x="4" y="7" width="1" height="1" fill="#808080"/><rect x="4" y="13" width="1" height="1" fill="#808080"/><rect x="6" y="0" width="1" height="1" fill="#808080"/><rect x="6" y="7" width="1" height="1" fill="#808080"/><rect x="6" y="13" width="1" height="1" fill="#808080"/><rect x="8" y="0" width="1" height="1" fill="#808080"/><rect x="8" y="7" width="1" height="1" fill="#808080"/><rect x="8" y="13" width="1" height="1" fill="#808080"/><rect x="10" y="0" width="1" height="1" fill="#808080"/><rect x="10" y="7" width="1" height="1" fill="#808080"/><rect x="10" y="13" width="1" height="1" fill="#808080"/><rect x="12" y="0" width="1" height="1" fill="#808080"/><rect x="12" y="7" width="1" height="1" fill="#808080"/><rect x="12" y="13" width="1" height="1" fill="#808080"/><rect x="0" y="0" width="1" height="1" fill="#808080"/><rect x="7" y="0" width="1" height="1" fill="#808080"/><rect x="13" y="0" width="1" height="1" fill="#808080"/><rect x="0" y="2" width="1" height="1" fill="#808080"/><rect x="7" y="2" width="1" height="1" fill="#808080"/><rect x="13" y="2" width="1" height="1" fill="#808080"/><rect x="0" y="4" width="1" height="1" fill="#808080"/><rect x="7" y="4" width="1" height="1" fill="#808080"/><rect x="13" y="4" width="1" height="1" fill="#808080"/><rect x="0" y="6" width="1" height="1" fill="#808080"/><rect x="7" y="6" width="1" height="1" fill="#808080"/><rect x="13" y="6" width="1" height="1" fill="#808080"/><rect x="0" y="8" width="1" height="1" fill="#808080"/><rect x="7" y="8" width="1" height="1" fill="#808080"/><rect x="13" y="8" width="1" height="1" fill="#808080"/><rect x="0" y="10" width="1" height="1" fill="#808080"/><rect x="7" y="10" width="1" height="1" fill="#808080"/><rect x="13" y="10" width="1" height="1" fill="#808080"/><rect x="0" y="12" width="1" height="1" fill="#808080"/><rect x="7" y="12" width="1" height="1" fill="#808080"/><rect x="13" y="12" width="1" height="1" fill="#808080"/><rect x="0" y="0" width="2" height="14" fill="#000"/></svg>
<svg class="a" style="left:38px;top:97px;" width="14" height="14" viewBox="0 0 14 14" shape-rendering="crispEdges"><rect x="0" y="0" width="1" height="1" fill="#808080"/><rect x="0" y="7" width="1" height="1" fill="#808080"/><rect x="0" y="13" width="1" height="1" fill="#808080"/><rect x="2" y="0" width="1" height="1" fill="#808080"/><rect x="2" y="7" width="1" height="1" fill="#808080"/><rect x="2" y="13" width="1" height="1" fill="#808080"/><rect x="4" y="0" width="1" height="1" fill="#808080"/><rect x="4" y="7" width="1" height="1" fill="#808080"/><rect x="4" y="13" width="1" height="1" fill="#808080"/><rect x="6" y="0" width="1" height="1" fill="#808080"/><rect x="6" y="7" width="1" height="1" fill="#808080"/><rect x="6" y="13" width="1" height="1" fill="#808080"/><rect x="8" y="0" width="1" height="1" fill="#808080"/><rect x="8" y="7" width="1" height="1" fill="#808080"/><rect x="8" y="13" width="1" height="1" fill="#808080"/><rect x="10" y="0" width="1" height="1" fill="#808080"/><rect x="10" y="7" width="1" height="1" fill="#808080"/><rect x="10" y="13" width="1" height="1" fill="#808080"/><rect x="12" y="0" width="1" height="1" fill="#808080"/><rect x="12" y="7" width="1" height="1" fill="#808080"/><rect x="12" y="13" width="1" height="1" fill="#808080"/><rect x="0" y="0" width="1" height="1" fill="#808080"/><rect x="7" y="0" width="1" height="1" fill="#808080"/><rect x="13" y="0" width="1" height="1" fill="#808080"/><rect x="0" y="2" width="1" height="1" fill="#808080"/><rect x="7" y="2" width="1" height="1" fill="#808080"/><rect x="13" y="2" width="1" height="1" fill="#808080"/><rect x="0" y="4" width="1" height="1" fill="#808080"/><rect x="7" y="4" width="1" height="1" fill="#808080"/><rect x="13" y="4" width="1" height="1" fill="#808080"/><rect x="0" y="6" width="1" height="1" fill="#808080"/><rect x="7" y="6" width="1" height="1" fill="#808080"/><rect x="13" y="6" width="1" height="1" fill="#808080"/><rect x="0" y="8" width="1" height="1" fill="#808080"/><rect x="7" y="8" width="1" height="1" fill="#808080"/><rect x="13" y="8" width="1" height="1" fill="#808080"/><rect x="0" y="10" width="1" height="1" fill="#808080"/><rect x="7" y="10" width="1" height="1" fill="#808080"/><rect x="13" y="10" width="1" height="1" fill="#808080"/><rect x="0" y="12" width="1" height="1" fill="#808080"/><rect x="7" y="12" width="1" height="1" fill="#808080"/><rect x="13" y="12" width="1" height="1" fill="#808080"/><rect x="12" y="0" width="2" height="14" fill="#000"/></svg>
<svg class="a" style="left:61px;top:97px;" width="14" height="14" viewBox="0 0 14 14" shape-rendering="crispEdges"><rect x="0" y="0" width="1" height="1" fill="#808080"/><rect x="0" y="7" width="1" height="1" fill="#808080"/><rect x="0" y="13" width="1" height="1" fill="#808080"/><rect x="2" y="0" width="1" height="1" fill="#808080"/><rect x="2" y="7" width="1" height="1" fill="#808080"/><rect x="2" y="13" width="1" height="1" fill="#808080"/><rect x="4" y="0" width="1" height="1" fill="#808080"/><rect x="4" y="7" width="1" height="1" fill="#808080"/><rect x="4" y="13" width="1" height="1" fill="#808080"/><rect x="6" y="0" width="1" height="1" fill="#808080"/><rect x="6" y="7" width="1" height="1" fill="#808080"/><rect x="6" y="13" width="1" height="1" fill="#808080"/><rect x="8" y="0" width="1" height="1" fill="#808080"/><rect x="8" y="7" width="1" height="1" fill="#808080"/><rect x="8" y="13" width="1" height="1" fill="#808080"/><rect x="10" y="0" width="1" height="1" fill="#808080"/><rect x="10" y="7" width="1" height="1" fill="#808080"/><rect x="10" y="13" width="1" height="1" fill="#808080"/><rect x="12" y="0" width="1" height="1" fill="#808080"/><rect x="12" y="7" width="1" height="1" fill="#808080"/><rect x="12" y="13" width="1" height="1" fill="#808080"/><rect x="0" y="0" width="1" height="1" fill="#808080"/><rect x="7" y="0" width="1" height="1" fill="#808080"/><rect x="13" y="0" width="1" height="1" fill="#808080"/><rect x="0" y="2" width="1" height="1" fill="#808080"/><rect x="7" y="2" width="1" height="1" fill="#808080"/><rect x="13" y="2" width="1" height="1" fill="#808080"/><rect x="0" y="4" width="1" height="1" fill="#808080"/><rect x="7" y="4" width="1" height="1" fill="#808080"/><rect x="13" y="4" width="1" height="1" fill="#808080"/><rect x="0" y="6" width="1" height="1" fill="#808080"/><rect x="7" y="6" width="1" height="1" fill="#808080"/><rect x="13" y="6" width="1" height="1" fill="#808080"/><rect x="0" y="8" width="1" height="1" fill="#808080"/><rect x="7" y="8" width="1" height="1" fill="#808080"/><rect x="13" y="8" width="1" height="1" fill="#808080"/><rect x="0" y="10" width="1" height="1" fill="#808080"/><rect x="7" y="10" width="1" height="1" fill="#808080"/><rect x="13" y="10" width="1" height="1" fill="#808080"/><rect x="0" y="12" width="1" height="1" fill="#808080"/><rect x="7" y="12" width="1" height="1" fill="#808080"/><rect x="13" y="12" width="1" height="1" fill="#808080"/><rect x="0" y="0" width="14" height="2" fill="#000"/></svg>
<svg class="a" style="left:84px;top:97px;" width="14" height="14" viewBox="0 0 14 14" shape-rendering="crispEdges"><rect x="0" y="0" width="1" height="1" fill="#808080"/><rect x="0" y="7" width="1" height="1" fill="#808080"/><rect x="0" y="13" width="1" height="1" fill="#808080"/><rect x="2" y="0" width="1" height="1" fill="#808080"/><rect x="2" y="7" width="1" height="1" fill="#808080"/><rect x="2" y="13" width="1" height="1" fill="#808080"/><rect x="4" y="0" width="1" height="1" fill="#808080"/><rect x="4" y="7" width="1" height="1" fill="#808080"/><rect x="4" y="13" width="1" height="1" fill="#808080"/><rect x="6" y="0" width="1" height="1" fill="#808080"/><rect x="6" y="7" width="1" height="1" fill="#808080"/><rect x="6" y="13" width="1" height="1" fill="#808080"/><rect x="8" y="0" width="1" height="1" fill="#808080"/><rect x="8" y="7" width="1" height="1" fill="#808080"/><rect x="8" y="13" width="1" height="1" fill="#808080"/><rect x="10" y="0" width="1" height="1" fill="#808080"/><rect x="10" y="7" width="1" height="1" fill="#808080"/><rect x="10" y="13" width="1" height="1" fill="#808080"/><rect x="12" y="0" width="1" height="1" fill="#808080"/><rect x="12" y="7" width="1" height="1" fill="#808080"/><rect x="12" y="13" width="1" height="1" fill="#808080"/><rect x="0" y="0" width="1" height="1" fill="#808080"/><rect x="7" y="0" width="1" height="1" fill="#808080"/><rect x="13" y="0" width="1" height="1" fill="#808080"/><rect x="0" y="2" width="1" height="1" fill="#808080"/><rect x="7" y="2" width="1" height="1" fill="#808080"/><rect x="13" y="2" width="1" height="1" fill="#808080"/><rect x="0" y="4" width="1" height="1" fill="#808080"/><rect x="7" y="4" width="1" height="1" fill="#808080"/><rect x="13" y="4" width="1" height="1" fill="#808080"/><rect x="0" y="6" width="1" height="1" fill="#808080"/><rect x="7" y="6" width="1" height="1" fill="#808080"/><rect x="13" y="6" width="1" height="1" fill="#808080"/><rect x="0" y="8" width="1" height="1" fill="#808080"/><rect x="7" y="8" width="1" height="1" fill="#808080"/><rect x="13" y="8" width="1" height="1" fill="#808080"/><rect x="0" y="10" width="1" height="1" fill="#808080"/><rect x="7" y="10" width="1" height="1" fill="#808080"/><rect x="13" y="10" width="1" height="1" fill="#808080"/><rect x="0" y="12" width="1" height="1" fill="#808080"/><rect x="7" y="12" width="1" height="1" fill="#808080"/><rect x="13" y="12" width="1" height="1" fill="#808080"/><rect x="0" y="12" width="14" height="2" fill="#000"/></svg>
<div class="a" style="left:105px;top:94px;width:1px;height:20px;background:#808080"></div><div class="a" style="left:106px;top:94px;width:1px;height:20px;background:#fff"></div>
<svg class="a" style="left:114px;top:97px;" width="14" height="14" viewBox="0 0 14 14" shape-rendering="crispEdges"><rect x="0" y="0" width="1" height="1" fill="#808080"/><rect x="0" y="7" width="1" height="1" fill="#808080"/><rect x="0" y="13" width="1" height="1" fill="#808080"/><rect x="2" y="0" width="1" height="1" fill="#808080"/><rect x="2" y="7" width="1" height="1" fill="#808080"/><rect x="2" y="13" width="1" height="1" fill="#808080"/><rect x="4" y="0" width="1" height="1" fill="#808080"/><rect x="4" y="7" width="1" height="1" fill="#808080"/><rect x="4" y="13" width="1" height="1" fill="#808080"/><rect x="6" y="0" width="1" height="1" fill="#808080"/><rect x="6" y="7" width="1" height="1" fill="#808080"/><rect x="6" y="13" width="1" height="1" fill="#808080"/><rect x="8" y="0" width="1" height="1" fill="#808080"/><rect x="8" y="7" width="1" height="1" fill="#808080"/><rect x="8" y="13" width="1" height="1" fill="#808080"/><rect x="10" y="0" width="1" height="1" fill="#808080"/><rect x="10" y="7" width="1" height="1" fill="#808080"/><rect x="10" y="13" width="1" height="1" fill="#808080"/><rect x="12" y="0" width="1" height="1" fill="#808080"/><rect x="12" y="7" width="1" height="1" fill="#808080"/><rect x="12" y="13" width="1" height="1" fill="#808080"/><rect x="0" y="0" width="1" height="1" fill="#808080"/><rect x="7" y="0" width="1" height="1" fill="#808080"/><rect x="13" y="0" width="1" height="1" fill="#808080"/><rect x="0" y="2" width="1" height="1" fill="#808080"/><rect x="7" y="2" width="1" height="1" fill="#808080"/><rect x="13" y="2" width="1" height="1" fill="#808080"/><rect x="0" y="4" width="1" height="1" fill="#808080"/><rect x="7" y="4" width="1" height="1" fill="#808080"/><rect x="13" y="4" width="1" height="1" fill="#808080"/><rect x="0" y="6" width="1" height="1" fill="#808080"/><rect x="7" y="6" width="1" height="1" fill="#808080"/><rect x="13" y="6" width="1" height="1" fill="#808080"/><rect x="0" y="8" width="1" height="1" fill="#808080"/><rect x="7" y="8" width="1" height="1" fill="#808080"/><rect x="13" y="8" width="1" height="1" fill="#808080"/><rect x="0" y="10" width="1" height="1" fill="#808080"/><rect x="7" y="10" width="1" height="1" fill="#808080"/><rect x="13" y="10" width="1" height="1" fill="#808080"/><rect x="0" y="12" width="1" height="1" fill="#808080"/><rect x="7" y="12" width="1" height="1" fill="#808080"/><rect x="13" y="12" width="1" height="1" fill="#808080"/></svg>
<svg class="a" style="left:137px;top:97px;" width="14" height="14" viewBox="0 0 14 14" shape-rendering="crispEdges"><rect x="0" y="0" width="14" height="2" fill="#000"/><rect x="0" y="12" width="14" height="2" fill="#000"/><rect x="0" y="0" width="2" height="14" fill="#000"/><rect x="12" y="0" width="2" height="14" fill="#000"/><rect x="6" y="0" width="2" height="14" fill="#000"/><rect x="0" y="6" width="14" height="2" fill="#000"/></svg>
<svg class="a" style="left:160px;top:97px;" width="14" height="14" viewBox="0 0 14 14" shape-rendering="crispEdges"><rect x="0" y="0" width="1" height="1" fill="#808080"/><rect x="0" y="7" width="1" height="1" fill="#808080"/><rect x="0" y="13" width="1" height="1" fill="#808080"/><rect x="2" y="0" width="1" height="1" fill="#808080"/><rect x="2" y="7" width="1" height="1" fill="#808080"/><rect x="2" y="13" width="1" height="1" fill="#808080"/><rect x="4" y="0" width="1" height="1" fill="#808080"/><rect x="4" y="7" width="1" height="1" fill="#808080"/><rect x="4" y="13" width="1" height="1" fill="#808080"/><rect x="6" y="0" width="1" height="1" fill="#808080"/><rect x="6" y="7" width="1" height="1" fill="#808080"/><rect x="6" y="13" width="1" height="1" fill="#808080"/><rect x="8" y="0" width="1" height="1" fill="#808080"/><rect x="8" y="7" width="1" height="1" fill="#808080"/><rect x="8" y="13" width="1" height="1" fill="#808080"/><rect x="10" y="0" width="1" height="1" fill="#808080"/><rect x="10" y="7" width="1" height="1" fill="#808080"/><rect x="10" y="13" width="1" height="1" fill="#808080"/><rect x="12" y="0" width="1" height="1" fill="#808080"/><rect x="12" y="7" width="1" height="1" fill="#808080"/><rect x="12" y="13" width="1" height="1" fill="#808080"/><rect x="0" y="0" width="1" height="1" fill="#808080"/><rect x="7" y="0" width="1" height="1" fill="#808080"/><rect x="13" y="0" width="1" height="1" fill="#808080"/><rect x="0" y="2" width="1" height="1" fill="#808080"/><rect x="7" y="2" width="1" height="1" fill="#808080"/><rect x="13" y="2" width="1" height="1" fill="#808080"/><rect x="0" y="4" width="1" height="1" fill="#808080"/><rect x="7" y="4" width="1" height="1" fill="#808080"/><rect x="13" y="4" width="1" height="1" fill="#808080"/><rect x="0" y="6" width="1" height="1" fill="#808080"/><rect x="7" y="6" width="1" height="1" fill="#808080"/><rect x="13" y="6" width="1" height="1" fill="#808080"/><rect x="0" y="8" width="1" height="1" fill="#808080"/><rect x="7" y="8" width="1" height="1" fill="#808080"/><rect x="13" y="8" width="1" height="1" fill="#808080"/><rect x="0" y="10" width="1" height="1" fill="#808080"/><rect x="7" y="10" width="1" height="1" fill="#808080"/><rect x="13" y="10" width="1" height="1" fill="#808080"/><rect x="0" y="12" width="1" height="1" fill="#808080"/><rect x="7" y="12" width="1" height="1" fill="#808080"/><rect x="13" y="12" width="1" height="1" fill="#808080"/><rect x="0" y="0" width="14" height="2" fill="#000"/><rect x="0" y="12" width="14" height="2" fill="#000"/><rect x="0" y="0" width="2" height="14" fill="#000"/><rect x="12" y="0" width="2" height="14" fill="#000"/></svg>
<svg class="a" style="left:183px;top:97px;" width="14" height="14" viewBox="0 0 14 14" shape-rendering="crispEdges"><rect x="0" y="0" width="1" height="1" fill="#808080"/><rect x="0" y="7" width="1" height="1" fill="#808080"/><rect x="0" y="13" width="1" height="1" fill="#808080"/><rect x="2" y="0" width="1" height="1" fill="#808080"/><rect x="2" y="7" width="1" height="1" fill="#808080"/><rect x="2" y="13" width="1" height="1" fill="#808080"/><rect x="4" y="0" width="1" height="1" fill="#808080"/><rect x="4" y="7" width="1" height="1" fill="#808080"/><rect x="4" y="13" width="1" height="1" fill="#808080"/><rect x="6" y="0" width="1" height="1" fill="#808080"/><rect x="6" y="7" width="1" height="1" fill="#808080"/><rect x="6" y="13" width="1" height="1" fill="#808080"/><rect x="8" y="0" width="1" height="1" fill="#808080"/><rect x="8" y="7" width="1" height="1" fill="#808080"/><rect x="8" y="13" width="1" height="1" fill="#808080"/><rect x="10" y="0" width="1" height="1" fill="#808080"/><rect x="10" y="7" width="1" height="1" fill="#808080"/><rect x="10" y="13" width="1" height="1" fill="#808080"/><rect x="12" y="0" width="1" height="1" fill="#808080"/><rect x="12" y="7" width="1" height="1" fill="#808080"/><rect x="12" y="13" width="1" height="1" fill="#808080"/><rect x="0" y="0" width="1" height="1" fill="#808080"/><rect x="7" y="0" width="1" height="1" fill="#808080"/><rect x="13" y="0" width="1" height="1" fill="#808080"/><rect x="0" y="2" width="1" height="1" fill="#808080"/><rect x="7" y="2" width="1" height="1" fill="#808080"/><rect x="13" y="2" width="1" height="1" fill="#808080"/><rect x="0" y="4" width="1" height="1" fill="#808080"/><rect x="7" y="4" width="1" height="1" fill="#808080"/><rect x="13" y="4" width="1" height="1" fill="#808080"/><rect x="0" y="6" width="1" height="1" fill="#808080"/><rect x="7" y="6" width="1" height="1" fill="#808080"/><rect x="13" y="6" width="1" height="1" fill="#808080"/><rect x="0" y="8" width="1" height="1" fill="#808080"/><rect x="7" y="8" width="1" height="1" fill="#808080"/><rect x="13" y="8" width="1" height="1" fill="#808080"/><rect x="0" y="10" width="1" height="1" fill="#808080"/><rect x="7" y="10" width="1" height="1" fill="#808080"/><rect x="13" y="10" width="1" height="1" fill="#808080"/><rect x="0" y="12" width="1" height="1" fill="#808080"/><rect x="7" y="12" width="1" height="1" fill="#808080"/><rect x="13" y="12" width="1" height="1" fill="#808080"/><rect x="6" y="0" width="2" height="14" fill="#000"/><rect x="0" y="6" width="14" height="2" fill="#000"/></svg>
<div class="a" style="left:203px;top:94px;width:1px;height:20px;background:#808080"></div><div class="a" style="left:204px;top:94px;width:1px;height:20px;background:#fff"></div>
<svg class="a" style="left:212px;top:97px;" width="14" height="14" viewBox="0 0 14 14" shape-rendering="crispEdges"><rect x="0" y="0" width="1" height="1" fill="#808080"/><rect x="0" y="7" width="1" height="1" fill="#808080"/><rect x="0" y="13" width="1" height="1" fill="#808080"/><rect x="2" y="0" width="1" height="1" fill="#808080"/><rect x="2" y="7" width="1" height="1" fill="#808080"/><rect x="2" y="13" width="1" height="1" fill="#808080"/><rect x="4" y="0" width="1" height="1" fill="#808080"/><rect x="4" y="7" width="1" height="1" fill="#808080"/><rect x="4" y="13" width="1" height="1" fill="#808080"/><rect x="6" y="0" width="1" height="1" fill="#808080"/><rect x="6" y="7" width="1" height="1" fill="#808080"/><rect x="6" y="13" width="1" height="1" fill="#808080"/><rect x="8" y="0" width="1" height="1" fill="#808080"/><rect x="8" y="7" width="1" height="1" fill="#808080"/><rect x="8" y="13" width="1" height="1" fill="#808080"/><rect x="10" y="0" width="1" height="1" fill="#808080"/><rect x="10" y="7" width="1" height="1" fill="#808080"/><rect x="10" y="13" width="1" height="1" fill="#808080"/><rect x="12" y="0" width="1" height="1" fill="#808080"/><rect x="12" y="7" width="1" height="1" fill="#808080"/><rect x="12" y="13" width="1" height="1" fill="#808080"/><rect x="0" y="0" width="1" height="1" fill="#808080"/><rect x="7" y="0" width="1" height="1" fill="#808080"/><rect x="13" y="0" width="1" height="1" fill="#808080"/><rect x="0" y="2" width="1" height="1" fill="#808080"/><rect x="7" y="2" width="1" height="1" fill="#808080"/><rect x="13" y="2" width="1" height="1" fill="#808080"/><rect x="0" y="4" width="1" height="1" fill="#808080"/><rect x="7" y="4" width="1" height="1" fill="#808080"/><rect x="13" y="4" width="1" height="1" fill="#808080"/><rect x="0" y="6" width="1" height="1" fill="#808080"/><rect x="7" y="6" width="1" height="1" fill="#808080"/><rect x="13" y="6" width="1" height="1" fill="#808080"/><rect x="0" y="8" width="1" height="1" fill="#808080"/><rect x="7" y="8" width="1" height="1" fill="#808080"/><rect x="13" y="8" width="1" height="1" fill="#808080"/><rect x="0" y="10" width="1" height="1" fill="#808080"/><rect x="7" y="10" width="1" height="1" fill="#808080"/><rect x="13" y="10" width="1" height="1" fill="#808080"/><rect x="0" y="12" width="1" height="1" fill="#808080"/><rect x="7" y="12" width="1" height="1" fill="#808080"/><rect x="13" y="12" width="1" height="1" fill="#808080"/><path d="M0.5 13.5 L13.5 0.5" stroke="#000" stroke-width="1.6"/></svg>
<svg class="a" style="left:235px;top:97px;" width="14" height="14" viewBox="0 0 14 14" shape-rendering="crispEdges"><rect x="0" y="0" width="1" height="1" fill="#808080"/><rect x="0" y="7" width="1" height="1" fill="#808080"/><rect x="0" y="13" width="1" height="1" fill="#808080"/><rect x="2" y="0" width="1" height="1" fill="#808080"/><rect x="2" y="7" width="1" height="1" fill="#808080"/><rect x="2" y="13" width="1" height="1" fill="#808080"/><rect x="4" y="0" width="1" height="1" fill="#808080"/><rect x="4" y="7" width="1" height="1" fill="#808080"/><rect x="4" y="13" width="1" height="1" fill="#808080"/><rect x="6" y="0" width="1" height="1" fill="#808080"/><rect x="6" y="7" width="1" height="1" fill="#808080"/><rect x="6" y="13" width="1" height="1" fill="#808080"/><rect x="8" y="0" width="1" height="1" fill="#808080"/><rect x="8" y="7" width="1" height="1" fill="#808080"/><rect x="8" y="13" width="1" height="1" fill="#808080"/><rect x="10" y="0" width="1" height="1" fill="#808080"/><rect x="10" y="7" width="1" height="1" fill="#808080"/><rect x="10" y="13" width="1" height="1" fill="#808080"/><rect x="12" y="0" width="1" height="1" fill="#808080"/><rect x="12" y="7" width="1" height="1" fill="#808080"/><rect x="12" y="13" width="1" height="1" fill="#808080"/><rect x="0" y="0" width="1" height="1" fill="#808080"/><rect x="7" y="0" width="1" height="1" fill="#808080"/><rect x="13" y="0" width="1" height="1" fill="#808080"/><rect x="0" y="2" width="1" height="1" fill="#808080"/><rect x="7" y="2" width="1" height="1" fill="#808080"/><rect x="13" y="2" width="1" height="1" fill="#808080"/><rect x="0" y="4" width="1" height="1" fill="#808080"/><rect x="7" y="4" width="1" height="1" fill="#808080"/><rect x="13" y="4" width="1" height="1" fill="#808080"/><rect x="0" y="6" width="1" height="1" fill="#808080"/><rect x="7" y="6" width="1" height="1" fill="#808080"/><rect x="13" y="6" width="1" height="1" fill="#808080"/><rect x="0" y="8" width="1" height="1" fill="#808080"/><rect x="7" y="8" width="1" height="1" fill="#808080"/><rect x="13" y="8" width="1" height="1" fill="#808080"/><rect x="0" y="10" width="1" height="1" fill="#808080"/><rect x="7" y="10" width="1" height="1" fill="#808080"/><rect x="13" y="10" width="1" height="1" fill="#808080"/><rect x="0" y="12" width="1" height="1" fill="#808080"/><rect x="7" y="12" width="1" height="1" fill="#808080"/><rect x="13" y="12" width="1" height="1" fill="#808080"/><path d="M0.5 0.5 L13.5 13.5" stroke="#000" stroke-width="1.6"/></svg>
<div class="a" style="left:255px;top:94px;width:1px;height:20px;background:#808080"></div><div class="a" style="left:256px;top:94px;width:1px;height:20px;background:#fff"></div>
<svg class="a" style="left:263px;top:97px;" width="16" height="16" viewBox="0 0 16 16" shape-rendering="crispEdges"><rect x="1" y="0" width="13" height="9" fill="#000"/><rect x="2" y="1" width="10" height="6" fill="#fff"/><rect x="1" y="12" width="14" height="2" fill="#000"/><rect x="0" y="10" width="2" height="6" fill="#000"/><rect x="14" y="10" width="2" height="6" fill="#000"/></svg>
<svg class="a" style="left:287px;top:97px;" width="16" height="16" viewBox="0 0 16 16" shape-rendering="crispEdges"><rect x="1" y="0" width="13" height="9" fill="#000"/><rect x="2" y="1" width="10" height="6" fill="#fff"/><rect x="3" y="12" width="10" height="2" fill="#000"/><path d="M0 13 L4 9.5 L4 16.5Z M16 13 L12 9.5 L12 16.5Z" fill="#000"/></svg>
<svg class="a" style="left:310px;top:97px;" width="16" height="16" viewBox="0 0 16 16" shape-rendering="crispEdges"><rect x="0" y="1" width="9" height="14" fill="#000"/><rect x="1" y="2" width="6" height="11" fill="#fff"/><rect x="11" y="0" width="2" height="16" fill="#000"/><rect x="9" y="0" width="6" height="2" fill="#000"/><rect x="9" y="14" width="6" height="2" fill="#000"/></svg>
<svg class="a" style="left:333px;top:97px;" width="16" height="16" viewBox="0 0 16 16" shape-rendering="crispEdges"><rect x="0" y="1" width="9" height="14" fill="#000"/><rect x="1" y="2" width="6" height="11" fill="#fff"/><rect x="12" y="3" width="2" height="10" fill="#000"/><path d="M13 0 L9.5 4 L16.5 4Z M13 16 L9.5 12 L16.5 12Z" fill="#000"/></svg>
<div class="a" style="left:354px;top:94px;width:1px;height:20px;background:#808080"></div><div class="a" style="left:355px;top:94px;width:1px;height:20px;background:#fff"></div>
<svg class="a" style="left:363px;top:98px;" width="14" height="14" viewBox="0 0 14 14" shape-rendering="crispEdges"><rect x="0" y="0" width="5" height="4" fill="#000"/><rect x="1" y="1" width="3" height="2" fill="#fff"/><rect x="0" y="5" width="5" height="4" fill="#000"/><rect x="1" y="6" width="3" height="2" fill="#fff"/><rect x="6" y="5" width="4" height="4" fill="#000"/><rect x="7" y="6" width="2" height="2" fill="#fff"/><rect x="4" y="11" width="7" height="1" fill="#2030A0"/><rect x="4" y="10" width="2" height="3" fill="#2030A0"/></svg>
<svg class="a" style="left:386px;top:98px;" width="14" height="14" viewBox="0 0 14 14" shape-rendering="crispEdges"><rect x="0" y="0" width="9" height="4" fill="#000"/><rect x="1" y="1" width="7" height="2" fill="#fff"/><rect x="0" y="5" width="5" height="4" fill="#000"/><rect x="1" y="6" width="3" height="2" fill="#fff"/><rect x="6" y="5" width="4" height="4" fill="#000"/><rect x="7" y="6" width="2" height="2" fill="#fff"/><rect x="3" y="11" width="7" height="1" fill="#2030A0"/><rect x="8" y="10" width="2" height="3" fill="#2030A0"/></svg>
<svg class="a" style="left:408px;top:98px;" width="14" height="14" viewBox="0 0 14 14" shape-rendering="crispEdges"><rect x="0" y="7" width="5" height="6" fill="#000"/><rect x="1" y="8" width="3" height="4" fill="#fff"/><rect x="6" y="5" width="5" height="8" fill="#000"/><rect x="7" y="6" width="3" height="6" fill="#fff"/><rect x="12" y="3" width="1" height="5" fill="#2030A0"/><rect x="11" y="4" width="3" height="1" fill="#2030A0"/></svg>
<svg class="a" style="left:432px;top:98px;" width="14" height="14" viewBox="0 0 14 14" shape-rendering="crispEdges"><rect x="0" y="3" width="5" height="10" fill="#000"/><rect x="1" y="4" width="3" height="8" fill="#fff"/><rect x="6" y="3" width="5" height="4" fill="#000"/><rect x="7" y="4" width="3" height="2" fill="#fff"/><rect x="6" y="8" width="5" height="5" fill="#000"/><rect x="7" y="9" width="3" height="3" fill="#fff"/><rect x="12" y="1" width="1" height="5" fill="#2030A0"/><rect x="11" y="2" width="3" height="1" fill="#2030A0"/></svg>
<div class="a" style="left:451px;top:94px;width:1px;height:20px;background:#808080"></div><div class="a" style="left:452px;top:94px;width:1px;height:20px;background:#fff"></div>
<div class="a" style="left:457px;top:95px;width:176px;height:16px;background:#fff"></div>
<div class="a" style="left:618px;top:95px;width:15px;height:16px;background:#D4D0C8;border:1px solid #fff"></div>
<div class="t" style="left:458px;top:97px"><b class="c">主</b><b class="c">项</b><b class="c">数</b><b class="c">据</b><span class="m">(MasterData3)</span></div>
<svg class="a" style="left:622px;top:101px;" width="7" height="4" viewBox="0 0 7 4" shape-rendering="crispEdges"><rect x="0" y="0" width="7" height="1" fill="#000"/><rect x="1" y="1" width="5" height="1" fill="#000"/><rect x="2" y="2" width="3" height="1" fill="#000"/><rect x="3" y="3" width="1" height="1" fill="#000"/></svg>
<svg class="a" style="left:638px;top:99px;" width="18" height="8" viewBox="0 0 18 8" shape-rendering="crispEdges"><rect x="0" y="0" width="18" height="8" fill="#000"/><rect x="1" y="1" width="3" height="2" fill="#fff"/><rect x="5" y="1" width="3" height="2" fill="#fff"/><rect x="9" y="1" width="3" height="2" fill="#fff"/><rect x="13" y="1" width="3" height="2" fill="#fff"/><rect x="1" y="5" width="3" height="2" fill="#fff"/><rect x="5" y="5" width="3" height="2" fill="#fff"/><rect x="9" y="5" width="3" height="2" fill="#fff"/><rect x="13" y="5" width="3" height="2" fill="#fff"/><rect x="0" y="3" width="18" height="2" fill="#D4D0C8"/><rect x="4" y="0" width="1" height="8" fill="#D4D0C8"/><rect x="8" y="0" width="1" height="8" fill="#D4D0C8"/><rect x="12" y="0" width="1" height="8" fill="#D4D0C8"/><rect x="16" y="0" width="2" height="8" fill="#D4D0C8"/></svg>
<svg class="a" style="left:661px;top:103px;" width="5" height="3" viewBox="0 0 5 3" shape-rendering="crispEdges"><rect x="0" y="0" width="5" height="1" fill="#000"/><rect x="1" y="1" width="3" height="1" fill="#000"/><rect x="2" y="2" width="1" height="1" fill="#000"/></svg>
<svg class="a" style="left:674px;top:97px;" width="15" height="15" viewBox="0 0 15 15" shape-rendering="crispEdges"><path d="M1 1 L14 14 M14 1 L1 14" stroke="#000" stroke-width="2.4"/></svg>
<svg class="a" style="left:695px;top:103px;" width="5" height="3" viewBox="0 0 5 3" shape-rendering="crispEdges"><rect x="0" y="0" width="5" height="1" fill="#000"/><rect x="1" y="1" width="3" height="1" fill="#000"/><rect x="2" y="2" width="1" height="1" fill="#000"/></svg>
<div class="a" style="left:4px;top:120px;width:3px;height:20px;border-left:1px solid #fff;border-right:1px solid #808080"></div>
<div class="a" style="left:7px;top:120px;width:3px;height:20px;border-left:1px solid #fff;border-right:1px solid #808080"></div>
<svg class="a" style="left:16px;top:121px;" width="14" height="16" viewBox="0 0 14 16" shape-rendering="crispEdges"><rect x="0" y="0" width="5" height="4" fill="#000"/><rect x="1" y="1" width="3" height="2" fill="#F8F060"/><rect x="8" y="0" width="5" height="4" fill="#000"/><rect x="9" y="1" width="3" height="2" fill="#F8F060"/><rect x="2" y="4" width="1" height="6" fill="#000"/><rect x="10" y="4" width="1" height="6" fill="#000"/><path d="M6.5 3 L4 7 L9 7Z" fill="#102890"/><rect x="6" y="6" width="1" height="4" fill="#102890"/><rect x="3" y="9" width="8" height="7" fill="#000"/><rect x="4" y="10" width="2" height="6" fill="#fff"/><rect x="8" y="10" width="2" height="6" fill="#fff"/></svg>
<svg class="a" style="left:38px;top:121px;" width="17" height="16" viewBox="0 0 17 16" shape-rendering="crispEdges"><rect x="0" y="0" width="6" height="4" fill="#000"/><rect x="1" y="1" width="4" height="2" fill="#F8F060"/><rect x="0" y="11" width="6" height="4" fill="#000"/><rect x="1" y="12" width="4" height="2" fill="#F8F060"/><rect x="5" y="3" width="1" height="9" fill="#000"/><path d="M7 7.5 L11 4.5 L11 10.5Z" fill="#102890"/><rect x="10" y="7" width="4" height="1" fill="#102890"/><rect x="12" y="5" width="4" height="6" fill="#000"/><rect x="13" y="6" width="3" height="4" fill="#fff"/></svg>
<svg class="a" style="left:60px;top:121px;" width="17" height="16" viewBox="0 0 17 16" shape-rendering="crispEdges"><rect x="0" y="0" width="6" height="15" fill="#000"/><rect x="1" y="1" width="4" height="13" fill="#F8F060"/><rect x="5" y="3" width="7" height="10" fill="#000"/><rect x="6" y="4" width="6" height="8" fill="#fff"/><path d="M7 8 L11 5 L11 11Z" fill="#102890"/><rect x="10" y="7" width="6" height="1" fill="#000"/></svg>
<svg class="a" style="left:83px;top:121px;" width="16" height="16" viewBox="0 0 16 16" shape-rendering="crispEdges"><rect x="0" y="0" width="15" height="6" fill="#000"/><rect x="1" y="1" width="13" height="4" fill="#F8F060"/><rect x="0" y="0" width="4" height="15" fill="#000"/><rect x="1" y="1" width="2" height="13" fill="#F8F060"/><rect x="6" y="6" width="7" height="9" fill="#000"/><rect x="7" y="7" width="5" height="8" fill="#fff"/><path d="M9.5 7 L7 11 L12 11Z" fill="#102890"/></svg>
<div class="a" style="left:105px;top:120px;width:1px;height:20px;background:#808080"></div><div class="a" style="left:106px;top:120px;width:1px;height:20px;background:#fff"></div>
<svg class="a" style="left:113px;top:121px;" width="15" height="16" viewBox="0 0 15 16" shape-rendering="crispEdges"><rect x="0" y="0" width="5" height="5" fill="#000"/><rect x="1" y="1" width="3" height="3" fill="#F8F060"/><rect x="9" y="0" width="5" height="5" fill="#000"/><rect x="10" y="1" width="3" height="3" fill="#F8F060"/><rect x="2" y="5" width="1" height="6" fill="#000"/><rect x="11" y="5" width="1" height="6" fill="#000"/><rect x="3" y="10" width="8" height="1" fill="#000"/><rect x="6" y="5" width="2" height="8" fill="#102890"/><path d="M4 12 L10 12 L7 16Z" fill="#102890"/></svg>
<svg class="a" style="left:135px;top:121px;" width="17" height="16" viewBox="0 0 17 16" shape-rendering="crispEdges"><rect x="0" y="0" width="6" height="5" fill="#000"/><rect x="1" y="1" width="4" height="3" fill="#F8F060"/><rect x="0" y="10" width="6" height="5" fill="#000"/><rect x="1" y="11" width="4" height="3" fill="#F8F060"/><rect x="0" y="5" width="11" height="5" fill="#000"/><rect x="1" y="6" width="10" height="3" fill="#fff"/><rect x="11" y="7" width="3" height="1" fill="#102890"/><path d="M13 4 L17 7.5 L13 11Z" fill="#102890"/></svg>
<svg class="a" style="left:159px;top:121px;" width="17" height="16" viewBox="0 0 17 16" shape-rendering="crispEdges"><rect x="0" y="0" width="13" height="13" fill="#000"/><rect x="1" y="1" width="11" height="11" fill="#F8F060"/><rect x="0" y="15" width="1" height="1" fill="#000"/><rect x="2" y="15" width="1" height="1" fill="#000"/><rect x="4" y="15" width="1" height="1" fill="#000"/><rect x="6" y="15" width="1" height="1" fill="#000"/><rect x="8" y="15" width="1" height="1" fill="#000"/><rect x="10" y="15" width="1" height="1" fill="#000"/><rect x="12" y="15" width="1" height="1" fill="#000"/><rect x="14" y="15" width="1" height="1" fill="#000"/><rect x="15" y="0" width="1" height="1" fill="#000"/><rect x="15" y="2" width="1" height="1" fill="#000"/><rect x="15" y="4" width="1" height="1" fill="#000"/><rect x="15" y="6" width="1" height="1" fill="#000"/><rect x="15" y="8" width="1" height="1" fill="#000"/><rect x="15" y="10" width="1" height="1" fill="#000"/><rect x="15" y="12" width="1" height="1" fill="#000"/><rect x="15" y="14" width="1" height="1" fill="#000"/><path d="M9 8 L14 13 M14 8 L9 13" stroke="#E02020" stroke-width="1.5"/></svg>
<div class="a" style="left:180px;top:120px;width:1px;height:20px;background:#808080"></div><div class="a" style="left:181px;top:120px;width:1px;height:20px;background:#fff"></div>
<svg class="a" style="left:190px;top:121px;" width="15" height="16" viewBox="0 0 15 16" shape-rendering="crispEdges"><rect x="0" y="0" width="9" height="8" fill="#000"/><rect x="1" y="1" width="7" height="6" fill="#F8F060"/><rect x="3" y="0" width="1" height="8" fill="#000"/><rect x="6" y="0" width="1" height="8" fill="#000"/><rect x="0" y="3" width="9" height="1" fill="#000"/><rect x="0" y="10" width="10" height="4" fill="#000"/><rect x="1" y="11" width="8" height="2" fill="#F8F060"/><path d="M10 2 L13 2 L13 13 L11 13" stroke="#000" fill="none"/><rect x="10" y="12" width="2" height="3" fill="#000"/></svg>
<svg class="a" style="left:213px;top:121px;" width="15" height="16" viewBox="0 0 15 16" shape-rendering="crispEdges"><rect x="0" y="0" width="9" height="4" fill="#000"/><rect x="1" y="1" width="7" height="2" fill="#F8F060"/><rect x="0" y="6" width="9" height="8" fill="#000"/><rect x="1" y="7" width="7" height="6" fill="#F8F060"/><rect x="3" y="6" width="1" height="8" fill="#000"/><rect x="6" y="6" width="1" height="8" fill="#000"/><rect x="0" y="9" width="9" height="1" fill="#000"/><path d="M10 2 L13 2 L13 13 L11 13" stroke="#000" fill="none"/><rect x="10" y="12" width="2" height="3" fill="#000"/></svg>
<svg class="a" style="left:236px;top:121px;" width="15" height="16" viewBox="0 0 15 16" shape-rendering="crispEdges"><rect x="0" y="0" width="10" height="14" fill="#000"/><rect x="1" y="1" width="8" height="12" fill="#F8F060"/><rect x="3" y="0" width="1" height="14" fill="#000"/><rect x="6" y="0" width="1" height="14" fill="#000"/><rect x="0" y="4" width="10" height="1" fill="#000"/><rect x="0" y="9" width="10" height="1" fill="#000"/><path d="M10 2 L13 2 L13 13 L11 13" stroke="#000" fill="none"/><rect x="10" y="12" width="2" height="3" fill="#000"/></svg>
<svg class="a" style="left:259px;top:121px;" width="15" height="16" viewBox="0 0 15 16" shape-rendering="crispEdges"><rect x="0" y="0" width="10" height="14" fill="#000"/><rect x="1" y="1" width="8" height="12" fill="#F8F060"/><rect x="3" y="0" width="1" height="8" fill="#000"/><rect x="6" y="0" width="1" height="8" fill="#000"/><rect x="0" y="4" width="10" height="1" fill="#000"/><rect x="0" y="8" width="10" height="1" fill="#000"/><rect x="0" y="11" width="10" height="1" fill="#000"/><path d="M10 2 L13 2 L13 13 L11 13" stroke="#000" fill="none"/><rect x="10" y="12" width="2" height="3" fill="#000"/></svg>
<div class="tb" style="left:278px;top:118px;width:459px;height:25px"></div>
<div class="a" style="left:282px;top:120px;width:3px;height:20px;border-left:1px solid #fff;border-right:1px solid #808080"></div>
<div class="a" style="left:285px;top:120px;width:3px;height:20px;border-left:1px solid #fff;border-right:1px solid #808080"></div>
<svg class="a" style="left:293px;top:121px;" width="16" height="17" viewBox="0 0 16 17" shape-rendering="crispEdges"><rect x="0" y="0" width="16" height="10" fill="#606060"/><rect x="1" y="1" width="14" height="2" fill="#2040B0"/><rect x="1" y="3" width="14" height="6" fill="#fff"/><rect x="3" y="5" width="3" height="1" fill="#606060"/><rect x="7" y="5" width="3" height="1" fill="#606060"/><rect x="11" y="5" width="3" height="1" fill="#606060"/><rect x="3" y="7" width="3" height="1" fill="#606060"/><rect x="7" y="7" width="3" height="1" fill="#606060"/><rect x="11" y="7" width="3" height="1" fill="#606060"/><path d="M3 11 L13 11 L8 16Z" fill="#108020"/></svg>
<svg class="a" style="left:318px;top:123px;" width="13" height="13" viewBox="0 0 13 13" shape-rendering="crispEdges"><text x="0" y="11" font-family="Liberation Serif" font-style="italic" font-weight="bold" font-size="13" fill="#000">f</text><text x="5" y="12" font-family="Liberation Serif" font-style="italic" font-weight="bold" font-size="9" fill="#000">x</text></svg>
<div class="a" style="left:335px;top:119px;width:401px;height:21px;background:#fff;border:1px solid;border-color:#808080 #fff #fff #808080;box-shadow:inset 1px 1px 0 #404040,inset -1px -1px 0 #D4D0C8"></div>
<div class="t" style="left:338px;top:123px">[<b class="c">图</b><b class="c">片</b>]</div>
<!-- grid -->
<div class="a" style="left:89px;top:195px;width:675px;height:119px;background:#fff"></div>
<div class="hc" style="left:8px;top:170px;width:81px;height:25px"></div>
<div class="hc" style="left:89px;top:170px;width:8px;height:25px"><span>A</span></div>
<div class="hc" style="left:97px;top:170px;width:44px;height:25px"><span>B</span></div>
<div class="hc" style="left:141px;top:170px;width:113px;height:25px"><span>C</span></div>
<div class="hc" style="left:254px;top:170px;width:80px;height:25px"><span>D</span></div>
<div class="hc" style="left:334px;top:170px;width:17px;height:25px"><span>E</span></div>
<div class="hc" style="left:351px;top:170px;width:19px;height:25px"><span>F</span></div>
<div class="hc" style="left:370px;top:170px;width:17px;height:25px"><span>G</span></div>
<div class="hc" style="left:387px;top:170px;width:19px;height:25px"><span>H</span></div>
<div class="hc" style="left:406px;top:170px;width:89px;height:25px"><span>I</span></div>
<div class="hc" style="left:495px;top:170px;width:146px;height:25px"><span>J</span></div>
<div class="hc" style="left:641px;top:170px;width:60px;height:25px"><span>K</span></div>
<div class="hc" style="left:701px;top:170px;width:63px;height:25px"><span>L</span></div>
<div class="rh" style="left:8px;top:195px;width:81px;height:30px"><span class="rn">1</span><span class="rl"><b class="c">页</b><b class="c">标</b><b class="c">头</b></span></div>
<div class="rh" style="left:8px;top:225px;width:81px;height:36px"><span class="rn">2</span><span class="rl"><b class="c">页</b><b class="c">标</b><b class="c">头</b></span></div>
<div class="rh" style="left:8px;top:261px;width:81px;height:34px"><span class="rn">3</span><span class="rl"><b class="c">主</b><b class="c">项</b><b class="c">数</b><b class="c">据</b></span></div>
<div class="rh" style="left:8px;top:295px;width:81px;height:19px"><span class="rn">4</span><span class="rl"><b class="c">总</b><b class="c">结</b></span></div>
<div class="a lg" style="left:89px;top:224px;width:7px;height:1px"></div>
<div class="a lg" style="left:89px;top:260px;width:7px;height:1px"></div>
<div class="a lg" style="left:89px;top:294px;width:7px;height:1px"></div>
<div class="a lg" style="left:89px;top:313px;width:7px;height:1px"></div>
<div class="a lg" style="left:96px;top:295px;width:1px;height:19px"></div>
<div class="a lg" style="left:140px;top:295px;width:1px;height:19px"></div>
<div class="a lg" style="left:253px;top:295px;width:1px;height:19px"></div>
<div class="a lg" style="left:333px;top:295px;width:1px;height:19px"></div>
<div class="a lg" style="left:494px;top:295px;width:1px;height:19px"></div>
<div class="a lg" style="left:640px;top:295px;width:1px;height:19px"></div>
<div class="a lg" style="left:700px;top:295px;width:1px;height:19px"></div>
<div class="a lg" style="left:763px;top:295px;width:1px;height:19px"></div>
<div class="a lg" style="left:89px;top:313px;width:675px;height:1px"></div>
<div class="a" style="left:97px;top:195px;width:666px;height:29px;background:#D4D0C8"></div>
<div class="t big" style="left:381px;top:202px;font-size:14px;line-height:14px;letter-spacing:14px"><b class="c">审</b><b class="c">批</b><b class="c">记</b><b class="c">录</b></div>
<div class="a bl" style="left:96px;top:195px;width:1px;height:100px"></div>
<div class="a bl" style="left:763px;top:195px;width:1px;height:100px"></div>
<div class="a bl" style="left:96px;top:224px;width:668px;height:1px"></div>
<div class="a bl" style="left:96px;top:260px;width:668px;height:1px"></div>
<div class="a bl" style="left:96px;top:294px;width:668px;height:1px"></div>
<div class="a bl" style="left:140px;top:224px;width:1px;height:71px"></div>
<div class="a bl" style="left:253px;top:224px;width:1px;height:71px"></div>
<div class="a bl" style="left:333px;top:224px;width:1px;height:71px"></div>
<div class="a bl" style="left:494px;top:224px;width:1px;height:71px"></div>
<div class="a bl" style="left:640px;top:224px;width:1px;height:71px"></div>
<div class="a" style="left:641px;top:261px;width:122px;height:33px;background:#CDD5E4"></div>
<div class="ct" style="left:97px;top:236px;width:43px"><b class="c">级</b><b class="c">别</b></div>
<div class="ct" style="left:141px;top:236px;width:112px"><b class="c">审</b><b class="c">核</b><b class="c">人</b></div>
<div class="ct" style="left:254px;top:236px;width:79px"><b class="c">结</b><b class="c">果</b></div>
<div class="ct" style="left:334px;top:236px;width:160px"><b class="c">批</b><b class="c">注</b></div>
<div class="ct" style="left:495px;top:236px;width:145px"><b class="c">审</b><b class="c">核</b><b class="c">时</b><b class="c">间</b></div>
<div class="ct" style="left:641px;top:236px;width:122px"><b class="c">电</b><b class="c">子</b><b class="c">签</b><b class="c">名</b></div>
<div class="ct" style="left:97px;top:271px;width:43px;padding-left:3px"><span><span class="m">[RMDBDataSet3.“</span><b class="c">级</b><b class="c">别</b><span class="m">“]</span></span></div>
<div class="ct" style="left:141px;top:271px;width:112px;padding-left:0px"><span><span class="m">[RMDBDataSet3.“</span><b class="c">审</b><b class="c">核</b><b class="c">人</b><span class="m">“]</span></span></div>
<div class="ct" style="left:254px;top:271px;width:79px;padding-left:0px"><span><span class="m">[RMDBDataSet3.“</span><b class="c">审</b><b class="c">核</b><b class="c">结</b><b class="c">果</b><span class="m">“]</span></span></div>
<div class="ct" style="left:334px;top:271px;width:160px;padding-left:0px"><span><span class="m">[RMDBDataSet3.“</span><b class="c">批</b><b class="c">注</b><span class="m">“]</span></span></div>
<div class="a" style="left:495px;top:269px;width:145px;height:16px;overflow:hidden"><div class="t ls1" style="left:-13px;top:2px;letter-spacing:1px"><span class="m" style="letter-spacing:-0.2px">[RMDBDataSet3.“</span><b class="c">审</b><b class="c">核</b><b class="c">时</b><b class="c">间</b><span class="m">“]</span></div></div>
<svg class="a" style="left:644px;top:264px" width="14" height="16" viewBox="0 0 14 16" shape-rendering="crispEdges"><rect x="0" y="0" width="14" height="16" fill="#000"/><rect x="1" y="1" width="12" height="14" fill="#fff"/><rect x="2" y="2" width="4" height="4" fill="#D01010"/><circle cx="9.5" cy="8" r="2.5" fill="#108020" shape-rendering="auto"/><path d="M2 14 L5.5 9.5 L8 14Z" fill="#1010A0"/></svg>
<div class="t" style="left:664px;top:265px">[<b class="c">图</b><b class="c">片</b>]</div>
<svg width="0" height="0" style="position:absolute"><defs><pattern id="dith" width="2" height="2" patternUnits="userSpaceOnUse"><rect width="1" height="1" fill="#808080"/><rect x="1" y="1" width="1" height="1" fill="#808080"/><rect x="1" y="0" width="1" height="1" fill="#D4D0C8"/><rect x="0" y="1" width="1" height="1" fill="#D4D0C8"/></pattern></defs></svg><!-- y end 638 -->
<div class="menu" style="left:722px;top:283px;width:134px;height:358px"></div>
<div class="mi" style="left:725px;top:286px;width:128px"><span class="mt"><b class="c">剪</b><b class="c">切</b><span class="m">(U)</span></span><svg class="a" style="left:2px;top:1px" width="15" height="15" viewBox="0 0 15 15" shape-rendering="crispEdges"><rect x="0" y="0" width="15" height="15" fill="#7890B8"/><rect x="1" y="1" width="13" height="13" fill="#fff"/><rect x="2" y="2" width="11" height="11" fill="#1040A8"/><rect x="3" y="3" width="9" height="1" fill="#6090E0"/><rect x="3" y="5" width="9" height="1" fill="#6090E0"/><rect x="3" y="7" width="9" height="1" fill="#6090E0"/><rect x="3" y="9" width="9" height="1" fill="#6090E0"/><rect x="3" y="11" width="9" height="1" fill="#6090E0"/></svg></div>
<div class="mi" style="left:725px;top:305px;width:128px"><span class="mt"><b class="c">复</b><b class="c">制</b><span class="m">(C)</span></span><svg class="a" style="left:1px;top:0px" width="16" height="17" viewBox="0 0 16 17" shape-rendering="crispEdges"><path d="M2 1 L2 6 M0 3.5 L5 3.5 M0.5 1.5 L4 5.5 M4 1.5 L0.5 5.5" stroke="#E8E040" stroke-width="1"/><rect x="5" y="4" width="1" height="12" fill="#000"/><rect x="5" y="15" width="10" height="1" fill="#000"/><rect x="14" y="4" width="1" height="12" fill="#000"/><rect x="6" y="4" width="8" height="11" fill="#fff"/><rect x="7" y="6" width="5" height="1" fill="#1030A0"/><rect x="7" y="8" width="5" height="1" fill="#1030A0"/><rect x="7" y="10" width="5" height="1" fill="#1030A0"/><rect x="7" y="12" width="5" height="1" fill="#1030A0"/><rect x="3" y="3" width="2" height="1" fill="#000"/></svg></div>
<div class="mi dis" style="left:725px;top:324px;width:128px"><span class="mt"><b class="c">粘</b><b class="c">贴</b><span class="m">(P)</span></span><svg class="a" style="left:1px;top:1px" width="15" height="15" viewBox="0 0 15 15" shape-rendering="crispEdges"><path d="M3 0 L3 5 M0.5 2.5 L5.5 2.5 M1 0.5 L5 4.5 M5 0.5 L1 4.5" stroke="#808080" stroke-width="1"/><rect x="1" y="4" width="13" height="10" fill="#808080"/><rect x="2" y="5" width="11" height="8" fill="url(#dith)"/><rect x="1" y="14" width="14" height="1" fill="#fff"/><rect x="14" y="5" width="1" height="10" fill="#fff"/></svg></div>
<div class="msep" style="left:726px;top:347px;width:124px"></div>
<div class="mi" style="left:725px;top:351px;width:128px"><span class="mt"><b class="c">单</b><b class="c">元</b><b class="c">格</b><b class="c">属</b><b class="c">性</b><span class="m">...</span></span><svg class="a" style="left:1px;top:0px" width="16" height="15" viewBox="0 0 16 15" shape-rendering="crispEdges"><rect x="0" y="5" width="12" height="9" fill="#000"/><rect x="1" y="6" width="10" height="7" fill="#fff"/><rect x="2" y="8" width="8" height="1" fill="#000"/><rect x="2" y="10" width="8" height="1" fill="#000"/><path d="M1 6 L6 1 L11 6" stroke="#000" fill="#fff"/><rect x="7" y="1" width="5" height="1" fill="#000"/><rect x="12" y="0" width="2" height="4" fill="#1020A0"/></svg></div>
<div class="mi" style="left:725px;top:370px;width:128px"><span class="mt"><b class="c">合</b><b class="c">并</b><b class="c">单</b><b class="c">元</b><b class="c">格</b></span><svg class="a" style="left:2px;top:0px" width="15" height="15" viewBox="0 0 15 15" shape-rendering="crispEdges"><rect x="0" y="0" width="10" height="8" fill="#000"/><rect x="1" y="1" width="8" height="6" fill="#fff"/><rect x="1" y="2" width="8" height="1" fill="#000"/><rect x="1" y="4" width="8" height="1" fill="#000"/><rect x="3" y="1" width="1" height="6" fill="#000"/><rect x="6" y="1" width="1" height="6" fill="#000"/><rect x="1" y="1" width="2" height="1" fill="#F8F060"/><rect x="4" y="1" width="2" height="1" fill="#F8F060"/><rect x="7" y="1" width="2" height="1" fill="#F8F060"/><rect x="1" y="3" width="2" height="1" fill="#F8F060"/><rect x="4" y="3" width="2" height="1" fill="#F8F060"/><rect x="7" y="3" width="2" height="1" fill="#F8F060"/><rect x="1" y="5" width="2" height="2" fill="#F8F060"/><rect x="4" y="5" width="2" height="2" fill="#F8F060"/><rect x="7" y="5" width="2" height="2" fill="#F8F060"/><rect x="0" y="9" width="10" height="5" fill="#000"/><rect x="1" y="10" width="8" height="3" fill="#F8F060"/><path d="M10 2 L12 2 L12 12 L10 12" stroke="#000" fill="none"/><rect x="10" y="11" width="2" height="3" fill="#000"/></svg></div>
<div class="mi" style="left:725px;top:389px;width:128px"><span class="mt"><b class="c">拆</b><b class="c">分</b><b class="c">单</b><b class="c">元</b><b class="c">格</b></span><svg class="a" style="left:2px;top:0px" width="15" height="15" viewBox="0 0 15 15" shape-rendering="crispEdges"><rect x="0" y="0" width="10" height="5" fill="#000"/><rect x="1" y="1" width="8" height="3" fill="#F8F060"/><rect x="0" y="6" width="10" height="8" fill="#000"/><rect x="1" y="7" width="8" height="6" fill="#F8F060"/><rect x="1" y="9" width="8" height="1" fill="#000"/><rect x="1" y="11" width="8" height="1" fill="#000"/><rect x="3" y="7" width="1" height="6" fill="#000"/><rect x="6" y="7" width="1" height="6" fill="#000"/><path d="M10 2 L12 2 L12 12 L10 12" stroke="#000" fill="none"/><rect x="10" y="11" width="2" height="3" fill="#000"/></svg></div>
<div class="msep" style="left:726px;top:412px;width:124px"></div>
<div class="mi" style="left:725px;top:416px;width:128px"><span class="mt"><b class="c">插</b><b class="c">入</b></span><span class="arr"></span></div>
<div class="mi" style="left:725px;top:435px;width:128px"><span class="mt"><b class="c">删</b><b class="c">除</b></span><span class="arr"></span></div>
<div class="msep" style="left:726px;top:458px;width:124px"></div>
<div class="mi hl" style="left:725px;top:462px;width:128px"><span class="mt"><b class="c">单</b><b class="c">元</b><b class="c">格</b><b class="c">类</b><b class="c">型</b></span><span class="arr"></span></div>
<div class="mi" style="left:725px;top:481px;width:128px"><span class="mt"><b class="c">插</b><b class="c">入</b><b class="c">栏</b></span><span class="arr"></span></div>
<div class="mi" style="left:725px;top:500px;width:128px"><span class="mt"><b class="c">栏</b><b class="c">目</b><span class="m">...</span></span><span class="arr"></span></div>
<div class="msep" style="left:726px;top:523px;width:124px"></div>
<div class="mi" style="left:725px;top:527px;width:128px"><span class="mt"><b class="c">边</b><b class="c">框</b><span class="m">...</span></span></div>
<div class="mi" style="left:725px;top:546px;width:128px"><span class="mt"><b class="c">编</b><b class="c">辑</b><span class="m">(E)...</span></span></div>
<div class="mi" style="left:725px;top:565px;width:128px"><span class="mt"><b class="c">清</b><b class="c">除</b><b class="c">内</b><b class="c">容</b></span></div>
<div class="msep" style="left:726px;top:588px;width:124px"></div>
<div class="mi" style="left:725px;top:592px;width:128px"><span class="mt"><b class="c">其</b><b class="c">它</b><b class="c">属</b><b class="c">性</b></span><span class="arr"></span></div>
<div class="msep" style="left:726px;top:615px;width:124px"></div>
<div class="mi" style="left:725px;top:619px;width:128px"><span class="mt"><b class="c">属</b><b class="c">性</b><span class="m">...</span></span></div>
<div class="menu" style="left:850px;top:459px;width:164px;height:196px"></div>
<div class="mi" style="left:853px;top:462px;width:158px"><span class="st"><b class="c">插</b><b class="c">入</b><b class="c">文</b><b class="c">本</b><b class="c">框</b></span></div>
<div class="mi" style="left:853px;top:481px;width:158px"><span class="st"><b class="c">插</b><b class="c">入</b><b class="c">汇</b><b class="c">总</b><b class="c">框</b></span></div>
<div class="mi hl" style="left:853px;top:500px;width:158px"><span class="chk"></span><span class="st"><b class="c">插</b><b class="c">入</b><b class="c">图</b><b class="c">片</b></span></div>
<div class="mi" style="left:853px;top:519px;width:158px"><span class="st"><b class="c">插</b><b class="c">入</b><b class="c">子</b><b class="c">报</b><b class="c">表</b></span></div>
<div class="mi" style="left:853px;top:538px;width:158px"><span class="st"><b class="c">斜</b><b class="c">线</b><b class="c">单</b><b class="c">元</b><b class="c">格</b></span></div>
<div class="mi" style="left:853px;top:557px;width:158px"><span class="st"><b class="c">中</b><b class="c">国</b><b class="c">样</b><b class="c">式</b><b class="c">财</b><b class="c">务</b><b class="c">单</b><b class="c">元</b><b class="c">格</b></span></div>
<div class="mi" style="left:853px;top:576px;width:158px"><span class="st"><span class="m">OLE</span></span></div>
<div class="mi" style="left:853px;top:595px;width:158px"><span class="st"><span class="m">CheckBox</span></span></div>
<div class="mi" style="left:853px;top:614px;width:158px"><span class="st"><span class="m">Angled Label</span></span></div>
<div class="mi" style="left:853px;top:633px;width:158px"><span class="st"><span class="m">RichText</span></span></div>
</body></html>
